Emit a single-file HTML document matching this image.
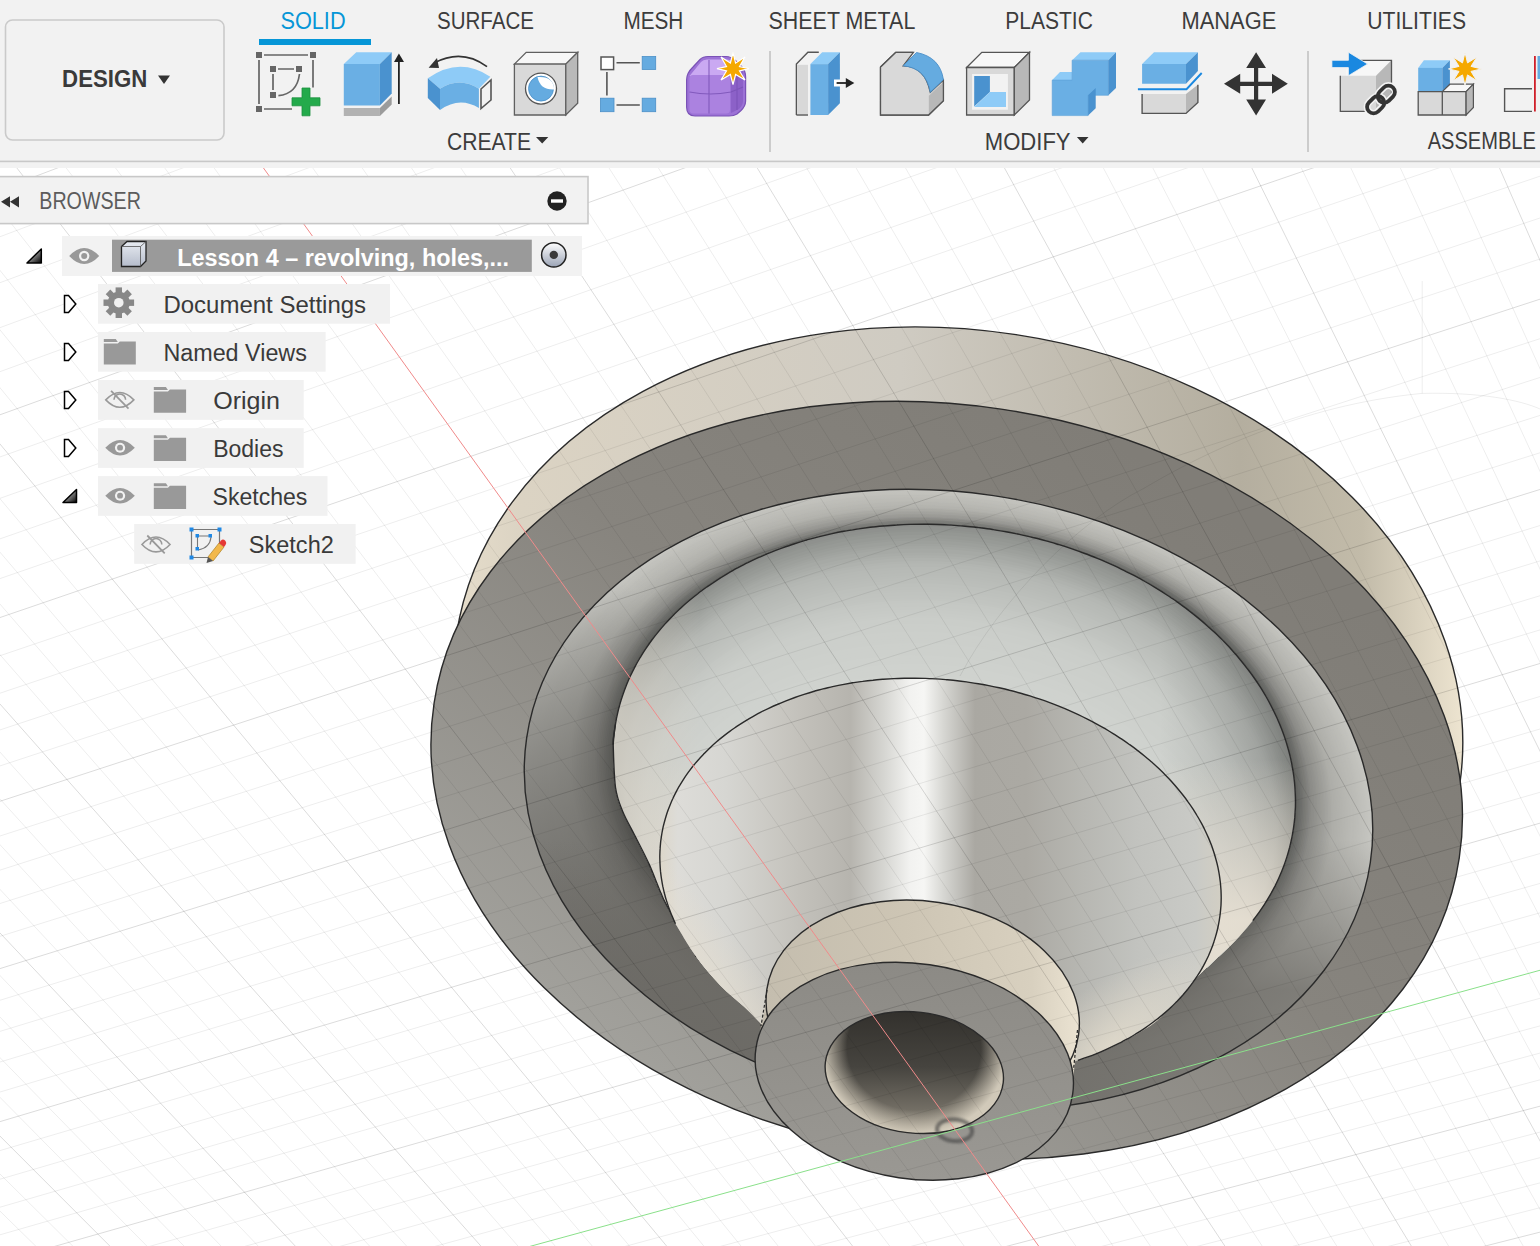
<!DOCTYPE html>
<html><head><meta charset="utf-8"><style>
html,body{margin:0;padding:0;}
body{width:1540px;height:1246px;overflow:hidden;position:relative;background:#fff;font-family:"Liberation Sans",sans-serif;}
#vp{position:absolute;left:0;top:0;}
</style></head><body>
<svg id="vp" width="1540" height="1246" viewBox="0 0 1540 1246">
<defs>
<linearGradient id="gBand" gradientUnits="userSpaceOnUse" x1="440" y1="0" x2="1465" y2="0">
 <stop offset="0" stop-color="#e8dfcc"/><stop offset="0.08" stop-color="#dbd3c3"/><stop offset="0.45" stop-color="#cfcbc2"/>
 <stop offset="0.78" stop-color="#b4ae9f"/><stop offset="0.9" stop-color="#c2bba9"/><stop offset="1" stop-color="#eee5d1"/></linearGradient>
<linearGradient id="gFlange" gradientUnits="userSpaceOnUse" x1="1100" y1="430" x2="650" y2="1080">
 <stop offset="0" stop-color="#807d77"/><stop offset="0.45" stop-color="#87847e"/><stop offset="1" stop-color="#a2a19c"/></linearGradient>
<radialGradient id="gGroove" gradientUnits="userSpaceOnUse" cx="0" cy="0" r="1" gradientTransform="translate(948.5 800.2) rotate(8.4) scale(426.4 307.9)">
 <stop offset="0.78" stop-color="#55534f"/><stop offset="0.87" stop-color="#8b8a85"/><stop offset="1" stop-color="#c2c1bb"/></radialGradient>
<linearGradient id="gGrooveL" gradientUnits="userSpaceOnUse" x1="560" y1="930" x2="740" y2="660">
 <stop offset="0" stop-color="#4a4844" stop-opacity="0.72"/><stop offset="0.45" stop-color="#4a4844" stop-opacity="0.42"/><stop offset="1" stop-color="#4a4844" stop-opacity="0"/></linearGradient>
<linearGradient id="gFloor" gradientUnits="userSpaceOnUse" x1="0" y1="840" x2="0" y2="990">
 <stop offset="0" stop-color="#6f6d68" stop-opacity="0"/><stop offset="1" stop-color="#6d6b66" stop-opacity="0.8"/></linearGradient>
<linearGradient id="gDome" gradientUnits="userSpaceOnUse" x1="0" y1="522" x2="0" y2="1030">
 <stop offset="0" stop-color="#7a7c79"/><stop offset="0.1" stop-color="#adb0ac"/><stop offset="0.3" stop-color="#c8cbc7"/>
 <stop offset="0.65" stop-color="#d2d3cf"/><stop offset="1" stop-color="#e8e2d5"/></linearGradient>
<linearGradient id="gCone" gradientUnits="userSpaceOnUse" x1="658" y1="877" x2="1224" y2="877">
 <stop offset="0" stop-color="#dcd6c8"/><stop offset="0.035" stop-color="#dddcd8"/><stop offset="0.12" stop-color="#d6d6d2"/><stop offset="0.17" stop-color="#cfcec9"/>
 <stop offset="0.25" stop-color="#c3c1bb"/><stop offset="0.34" stop-color="#b6b4ae"/><stop offset="0.40" stop-color="#d6d6d2"/>
 <stop offset="0.445" stop-color="#f2f2f0"/><stop offset="0.47" stop-color="#f6f6f4"/><stop offset="0.505" stop-color="#d6d6d2"/>
 <stop offset="0.56" stop-color="#aaa8a2"/><stop offset="0.65" stop-color="#aba9a3"/><stop offset="0.75" stop-color="#b7b7b2"/>
 <stop offset="0.85" stop-color="#c2c3bf"/><stop offset="0.95" stop-color="#c9cac6"/><stop offset="1" stop-color="#d3cfc3"/></linearGradient>
<radialGradient id="gConeBR" gradientUnits="userSpaceOnUse" cx="0" cy="0" r="1" gradientTransform="translate(1110 1045) rotate(-35) scale(150 60)">
 <stop offset="0" stop-color="#e8e0cf" stop-opacity="0.75"/><stop offset="1" stop-color="#e8e0cf" stop-opacity="0"/></radialGradient>
<linearGradient id="gBoss" gradientUnits="userSpaceOnUse" x1="760" y1="0" x2="1080" y2="0">
 <stop offset="0" stop-color="#c4bdae"/><stop offset="0.45" stop-color="#cdc5b4"/><stop offset="0.85" stop-color="#d8d0bf"/><stop offset="1" stop-color="#ebe3d2"/></linearGradient>
<linearGradient id="gFace" gradientUnits="userSpaceOnUse" x1="0" y1="960" x2="0" y2="1180">
 <stop offset="0" stop-color="#8c8a85"/><stop offset="1" stop-color="#9a9893"/></linearGradient>
<linearGradient id="gHole" gradientUnits="userSpaceOnUse" x1="0" y1="1012" x2="0" y2="1134">
 <stop offset="0" stop-color="#33312d"/><stop offset="0.45" stop-color="#46443f"/><stop offset="1" stop-color="#8c867a"/></linearGradient>
<radialGradient id="gHoleEdge" gradientUnits="userSpaceOnUse" cx="0" cy="0" r="1" gradientTransform="translate(914 1048) rotate(6.6) scale(93 86)">
 <stop offset="0.72" stop-color="#d8d0bf" stop-opacity="0"/><stop offset="1" stop-color="#dcd4c3" stop-opacity="0.9"/></radialGradient>
<filter id="fBlur" x="-20%" y="-20%" width="140%" height="140%"><feGaussianBlur stdDeviation="0.9"/></filter>
<linearGradient id="gGrooveTop" gradientUnits="userSpaceOnUse" x1="0" y1="488" x2="0" y2="600">
 <stop offset="0" stop-color="#c4c3bd" stop-opacity="0.3"/><stop offset="1" stop-color="#c4c3bd" stop-opacity="0"/></linearGradient>
<linearGradient id="gDomeBot" gradientUnits="userSpaceOnUse" x1="0" y1="760" x2="0" y2="920">
 <stop offset="0" stop-color="#e4ddd0" stop-opacity="0"/><stop offset="1" stop-color="#e6dfd2" stop-opacity="0.95"/></linearGradient>
<linearGradient id="gDomeL" gradientUnits="userSpaceOnUse" x1="610" y1="0" x2="700" y2="0">
 <stop offset="0" stop-color="#d6d2c8" stop-opacity="0.9"/><stop offset="1" stop-color="#d6d2c8" stop-opacity="0"/></linearGradient>
<linearGradient id="gDomeR" gradientUnits="userSpaceOnUse" x1="1160" y1="0" x2="1295" y2="0">
 <stop offset="0" stop-color="#5a5c5a" stop-opacity="0"/><stop offset="1" stop-color="#5a5c5a" stop-opacity="0.3"/></linearGradient>
<linearGradient id="gConeL" gradientUnits="userSpaceOnUse" x1="712" y1="993" x2="752" y2="960">
 <stop offset="0" stop-color="#e6dece" stop-opacity="0.7"/><stop offset="1" stop-color="#e6dece" stop-opacity="0"/></linearGradient>
</defs>
<path d="M1459.63,785.17 A507.2,380.0 8.5 1 1 456.37,635.23 A507.2,380.0 8.5 1 1 1459.63,785.17 Z" fill="url(#gBand)" stroke="#2a2a2a" stroke-width="1.4"/>
<path d="M1459.27,857.92 A518.4,374.5 8.6 1 1 434.13,702.88 A518.4,374.5 8.6 1 1 1459.27,857.92 Z" fill="url(#gFlange)" stroke="#2a2a2a" stroke-width="1.4"/>
<path d="M1370.33,862.49 A426.4,307.9 8.4 1 1 526.67,737.91 A426.4,307.9 8.4 1 1 1370.33,862.49 Z" fill="#c6c6c1" />
<path d="M1368.79,861.81 A424.73199999999997,306.768 8.402 1 1 528.44,737.69 A424.73199999999997,306.768 8.402 1 1 1368.79,861.81 Z" fill="#c5c5c0" />
<path d="M1367.25,861.14 A423.06399999999996,305.63599999999997 8.404 1 1 530.21,737.48 A423.06399999999996,305.63599999999997 8.404 1 1 1367.25,861.14 Z" fill="#c4c4bf" />
<path d="M1365.71,860.46 A421.396,304.504 8.406 1 1 531.97,737.26 A421.396,304.504 8.406 1 1 1365.71,860.46 Z" fill="#c3c3be" />
<path d="M1364.17,859.79 A419.728,303.37199999999996 8.408000000000001 1 1 533.74,737.04 A419.728,303.37199999999996 8.408000000000001 1 1 1364.17,859.79 Z" fill="#c2c2bd" />
<path d="M1362.63,859.11 A418.06,302.24 8.41 1 1 535.51,736.83 A418.06,302.24 8.41 1 1 1362.63,859.11 Z" fill="#c1c1bc" />
<path d="M1361.10,858.44 A416.39199999999994,301.108 8.412 1 1 537.27,736.61 A416.39199999999994,301.108 8.412 1 1 1361.10,858.44 Z" fill="#c0c0bb" />
<path d="M1359.56,857.76 A414.72399999999993,299.976 8.414 1 1 539.04,736.39 A414.72399999999993,299.976 8.414 1 1 1359.56,857.76 Z" fill="#bfbfba" />
<path d="M1358.02,857.09 A413.056,298.844 8.416 1 1 540.80,736.18 A413.056,298.844 8.416 1 1 1358.02,857.09 Z" fill="#bebeb9" />
<path d="M1356.48,856.41 A411.388,297.712 8.418000000000001 1 1 542.57,735.96 A411.388,297.712 8.418000000000001 1 1 1356.48,856.41 Z" fill="#bdbdb8" />
<path d="M1354.94,855.73 A409.71999999999997,296.58 8.42 1 1 544.34,735.75 A409.71999999999997,296.58 8.42 1 1 1354.94,855.73 Z" fill="#bcbcb7" />
<path d="M1353.41,855.06 A408.05199999999996,295.448 8.422 1 1 546.10,735.53 A408.05199999999996,295.448 8.422 1 1 1353.41,855.06 Z" fill="#bbbbb6" />
<path d="M1351.87,854.38 A406.38399999999996,294.316 8.424 1 1 547.87,735.31 A406.38399999999996,294.316 8.424 1 1 1351.87,854.38 Z" fill="#babab5" />
<path d="M1350.33,853.71 A404.716,293.18399999999997 8.426 1 1 549.63,735.10 A404.716,293.18399999999997 8.426 1 1 1350.33,853.71 Z" fill="#babab5" />
<path d="M1348.79,853.03 A403.048,292.052 8.428 1 1 551.40,734.88 A403.048,292.052 8.428 1 1 1348.79,853.03 Z" fill="#b9b9b4" />
<path d="M1347.25,852.35 A401.38,290.91999999999996 8.43 1 1 553.17,734.67 A401.38,290.91999999999996 8.43 1 1 1347.25,852.35 Z" fill="#b8b8b3" />
<path d="M1345.72,851.68 A399.712,289.788 8.432 1 1 554.93,734.45 A399.712,289.788 8.432 1 1 1345.72,851.68 Z" fill="#b7b7b2" />
<path d="M1344.18,851.00 A398.044,288.656 8.434000000000001 1 1 556.70,734.24 A398.044,288.656 8.434000000000001 1 1 1344.18,851.00 Z" fill="#b6b6b1" />
<path d="M1342.64,850.32 A396.376,287.524 8.436 1 1 558.46,734.02 A396.376,287.524 8.436 1 1 1342.64,850.32 Z" fill="#b5b5b0" />
<path d="M1341.10,849.65 A394.70799999999997,286.392 8.438 1 1 560.23,733.81 A394.70799999999997,286.392 8.438 1 1 1341.10,849.65 Z" fill="#b4b4af" />
<path d="M1339.56,848.97 A393.03999999999996,285.26 8.440000000000001 1 1 562.00,733.59 A393.03999999999996,285.26 8.440000000000001 1 1 1339.56,848.97 Z" fill="#b3b3ae" />
<path d="M1338.03,848.29 A391.37199999999996,284.128 8.442 1 1 563.76,733.38 A391.37199999999996,284.128 8.442 1 1 1338.03,848.29 Z" fill="#b2b2ad" />
<path d="M1336.49,847.61 A389.704,282.996 8.443999999999999 1 1 565.53,733.16 A389.704,282.996 8.443999999999999 1 1 1336.49,847.61 Z" fill="#b1b1ac" />
<path d="M1334.95,846.94 A388.036,281.864 8.446 1 1 567.29,732.95 A388.036,281.864 8.446 1 1 1334.95,846.94 Z" fill="#b0b0ab" />
<path d="M1333.41,846.26 A386.368,280.73199999999997 8.448 1 1 569.06,732.73 A386.368,280.73199999999997 8.448 1 1 1333.41,846.26 Z" fill="#afafaa" />
<path d="M1331.87,845.58 A384.7,279.6 8.45 1 1 570.83,732.52 A384.7,279.6 8.45 1 1 1331.87,845.58 Z" fill="#aeaea9" />
<path d="M1330.34,844.90 A383.032,278.46799999999996 8.452 1 1 572.59,732.31 A383.032,278.46799999999996 8.452 1 1 1330.34,844.90 Z" fill="#acaca7" />
<path d="M1328.80,844.22 A381.36400000000003,277.336 8.454 1 1 574.36,732.09 A381.36400000000003,277.336 8.454 1 1 1328.80,844.22 Z" fill="#a9a9a4" />
<path d="M1327.26,843.55 A379.696,276.204 8.456000000000001 1 1 576.12,731.88 A379.696,276.204 8.456000000000001 1 1 1327.26,843.55 Z" fill="#a7a7a2" />
<path d="M1325.72,842.87 A378.028,275.072 8.458 1 1 577.89,731.66 A378.028,275.072 8.458 1 1 1325.72,842.87 Z" fill="#a4a4a0" />
<path d="M1324.18,842.19 A376.36,273.94 8.46 1 1 579.66,731.45 A376.36,273.94 8.46 1 1 1324.18,842.19 Z" fill="#a2a29d" />
<path d="M1322.65,841.51 A374.692,272.808 8.462 1 1 581.42,731.24 A374.692,272.808 8.462 1 1 1322.65,841.51 Z" fill="#9f9f9b" />
<path d="M1321.11,840.83 A373.024,271.67600000000004 8.464 1 1 583.19,731.02 A373.024,271.67600000000004 8.464 1 1 1321.11,840.83 Z" fill="#9d9d98" />
<path d="M1319.57,840.15 A371.356,270.544 8.466 1 1 584.95,730.81 A371.356,270.544 8.466 1 1 1319.57,840.15 Z" fill="#9b9b96" />
<path d="M1318.03,839.48 A369.688,269.412 8.468 1 1 586.72,730.60 A369.688,269.412 8.468 1 1 1318.03,839.48 Z" fill="#989894" />
<path d="M1316.50,838.80 A368.02,268.28 8.469999999999999 1 1 588.48,730.38 A368.02,268.28 8.469999999999999 1 1 1316.50,838.80 Z" fill="#969691" />
<path d="M1314.96,838.12 A366.352,267.148 8.472000000000001 1 1 590.25,730.17 A366.352,267.148 8.472000000000001 1 1 1314.96,838.12 Z" fill="#93938f" />
<path d="M1313.42,837.44 A364.68399999999997,266.016 8.474 1 1 592.02,729.96 A364.68399999999997,266.016 8.474 1 1 1313.42,837.44 Z" fill="#91918d" />
<path d="M1311.88,836.76 A363.01599999999996,264.884 8.475999999999999 1 1 593.78,729.75 A363.01599999999996,264.884 8.475999999999999 1 1 1311.88,836.76 Z" fill="#8e8e8a" />
<path d="M1310.35,836.08 A361.348,263.752 8.478 1 1 595.55,729.53 A361.348,263.752 8.478 1 1 1310.35,836.08 Z" fill="#8c8c88" />
<path d="M1308.81,835.40 A359.68000000000006,262.62 8.48 1 1 597.31,729.32 A359.68000000000006,262.62 8.48 1 1 1308.81,835.40 Z" fill="#888884" />
<path d="M1307.27,834.72 A358.01200000000006,261.48800000000006 8.482000000000001 1 1 599.08,729.11 A358.01200000000006,261.48800000000006 8.482000000000001 1 1 1307.27,834.72 Z" fill="#838380" />
<path d="M1305.73,834.04 A356.344,260.356 8.484 1 1 600.84,728.90 A356.344,260.356 8.484 1 1 1305.73,834.04 Z" fill="#7f7f7b" />
<path d="M1304.19,833.36 A354.67600000000004,259.224 8.486 1 1 602.61,728.68 A354.67600000000004,259.224 8.486 1 1 1304.19,833.36 Z" fill="#7b7b77" />
<path d="M1302.66,832.68 A353.008,258.092 8.488 1 1 604.37,728.47 A353.008,258.092 8.488 1 1 1302.66,832.68 Z" fill="#767773" />
<path d="M1301.12,832.00 A351.34,256.96000000000004 8.49 1 1 606.14,728.26 A351.34,256.96000000000004 8.49 1 1 1301.12,832.00 Z" fill="#72726f" />
<path d="M1299.58,831.32 A349.672,255.82800000000003 8.492 1 1 607.91,728.05 A349.672,255.82800000000003 8.492 1 1 1299.58,831.32 Z" fill="#6d6e6b" />
<path d="M1298.04,830.64 A348.00399999999996,254.696 8.494 1 1 609.67,727.84 A348.00399999999996,254.696 8.494 1 1 1298.04,830.64 Z" fill="#696a67" />
<path d="M1296.51,829.96 A346.33599999999996,253.564 8.496 1 1 611.44,727.62 A346.33599999999996,253.564 8.496 1 1 1296.51,829.96 Z" fill="#656662" />
<path d="M1294.97,829.28 A344.668,252.432 8.498 1 1 613.20,727.41 A344.668,252.432 8.498 1 1 1294.97,829.28 Z" fill="#60615e" />
<path d="M1293.43,828.60 A343.0,251.3 8.5 1 1 614.97,727.20 A343.0,251.3 8.5 1 1 1293.43,828.60 Z" fill="#5c5d5a" />
<clipPath id="cE3"><path d="M1370.33,862.49 A426.4,307.9 8.4 1 1 526.67,737.91 A426.4,307.9 8.4 1 1 1370.33,862.49 Z" fill="#000" /></clipPath>
<g clip-path="url(#cE3)">
<rect x="400" y="400" width="1100" height="800" fill="url(#gGrooveTop)"/>
<rect x="400" y="400" width="1100" height="800" fill="url(#gGrooveL)"/>
<rect x="400" y="400" width="1100" height="800" fill="url(#gFloor)"/>
</g>
<path d="M1370.33,862.49 A426.4,307.9 8.4 1 1 526.67,737.91 A426.4,307.9 8.4 1 1 1370.33,862.49 Z" fill="none" stroke="#2a2a2a" stroke-width="1.4"/>
<clipPath id="cDome"><path d="M761.2,1023.9 C758.4,1021.1 751.2,1013.5 744.4,1007.1 C737.6,1000.7 728.3,993.8 720.3,985.4 C712.3,977.0 703.4,967.0 696.2,956.6 C689.0,946.2 682.4,932.4 677.0,922.9 C671.6,913.4 668.3,909.2 663.7,899.5 C659.1,889.8 654.0,875.1 649.2,864.4 C644.4,853.7 639.2,844.3 634.8,835.5 C630.4,826.7 625.9,819.5 622.7,811.5 C619.5,803.5 617.1,798.6 615.5,787.5 C613.9,776.4 613.5,753.5 613.2,744.7 C613.0,735.8 613.7,738.0 614.0,734.6 C614.4,731.3 614.8,727.9 615.4,724.6 C615.9,721.3 616.5,718.0 617.3,714.7 C618.0,711.5 618.8,708.2 619.7,704.9 C620.6,701.7 621.6,698.5 622.7,695.3 C623.8,692.1 624.9,688.9 626.2,685.7 C627.5,682.6 628.8,679.4 630.2,676.3 C631.7,673.2 633.2,670.1 634.8,667.1 C636.4,664.0 638.1,661.0 639.9,658.0 C641.7,655.1 643.5,652.1 645.5,649.2 C647.4,646.3 649.4,643.4 651.5,640.5 C653.6,637.7 655.8,634.9 658.1,632.1 C660.4,629.3 662.7,626.6 665.1,623.9 C667.6,621.2 670.1,618.5 672.6,615.9 C675.2,613.3 677.9,610.8 680.6,608.2 C683.3,605.7 686.1,603.2 689.0,600.8 C691.8,598.4 694.8,596.0 697.8,593.7 C700.8,591.4 703.9,589.1 707.0,586.8 C710.2,584.6 713.4,582.4 716.7,580.3 C719.9,578.2 723.3,576.1 726.7,574.1 C730.1,572.1 733.5,570.1 737.0,568.2 C740.6,566.3 744.1,564.4 747.8,562.7 C751.4,560.9 755.1,559.1 758.8,557.4 C762.6,555.8 766.3,554.2 770.2,552.6 C774.0,551.0 777.9,549.5 781.8,548.1 C785.8,546.7 789.8,545.3 793.8,544.0 C797.8,542.7 801.9,541.4 806.0,540.2 C810.1,539.1 814.2,537.9 818.4,536.9 C822.6,535.8 826.8,534.8 831.1,533.9 C835.3,533.0 839.6,532.1 843.9,531.3 C848.2,530.5 852.6,529.8 857.0,529.1 C861.3,528.5 865.7,527.9 870.2,527.3 C874.6,526.8 879.0,526.4 883.5,526.0 C887.9,525.6 892.4,525.2 896.9,525.0 C901.4,524.7 905.9,524.5 910.4,524.4 C915.0,524.3 919.5,524.2 924.0,524.2 C928.6,524.3 933.1,524.3 937.7,524.5 C942.2,524.6 946.8,524.8 951.4,525.1 C955.9,525.4 960.5,525.8 965.0,526.2 C969.6,526.6 974.1,527.1 978.7,527.6 C983.2,528.2 987.8,528.8 992.3,529.5 C996.8,530.2 1001.4,530.9 1005.9,531.8 C1010.4,532.6 1014.9,533.5 1019.3,534.4 C1023.8,535.4 1028.3,536.4 1032.7,537.5 C1037.2,538.5 1041.6,539.7 1046.0,540.9 C1050.4,542.1 1054.7,543.4 1059.1,544.7 C1063.4,546.0 1067.7,547.4 1072.0,548.9 C1076.3,550.4 1080.5,551.9 1084.7,553.5 C1088.9,555.0 1093.1,556.7 1097.3,558.4 C1101.4,560.1 1105.5,561.8 1109.6,563.6 C1113.6,565.5 1117.6,567.3 1121.6,569.3 C1125.6,571.2 1129.5,573.2 1133.4,575.2 C1137.3,577.2 1141.1,579.3 1144.9,581.5 C1148.7,583.6 1152.4,585.8 1156.1,588.1 C1159.8,590.3 1163.4,592.6 1166.9,595.0 C1170.5,597.3 1174.0,599.7 1177.5,602.1 C1180.9,604.6 1184.3,607.1 1187.6,609.6 C1191.0,612.2 1194.2,614.7 1197.4,617.4 C1200.6,620.0 1203.8,622.7 1206.8,625.4 C1209.9,628.1 1212.9,630.8 1215.8,633.6 C1218.7,636.4 1221.6,639.2 1224.4,642.1 C1227.2,644.9 1229.9,647.8 1232.5,650.8 C1235.2,653.7 1237.7,656.7 1240.2,659.7 C1242.7,662.7 1245.1,665.7 1247.4,668.8 C1249.8,671.8 1252.0,674.9 1254.2,678.0 C1256.4,681.1 1258.5,684.3 1260.5,687.4 C1262.5,690.6 1264.4,693.8 1266.3,697.0 C1268.1,700.2 1269.9,703.5 1271.5,706.7 C1273.2,710.0 1274.8,713.2 1276.3,716.5 C1277.8,719.8 1279.2,723.1 1280.6,726.4 C1281.9,729.8 1283.2,733.1 1284.3,736.4 C1285.5,739.8 1286.5,743.1 1287.5,746.5 C1288.5,749.9 1289.4,753.2 1290.2,756.6 C1291.0,760.0 1291.7,763.4 1292.3,766.8 C1292.9,770.1 1293.5,773.5 1293.9,776.9 C1294.3,780.3 1294.7,783.7 1294.9,787.1 C1295.2,790.5 1295.3,793.9 1295.4,797.2 C1295.5,800.6 1295.5,804.0 1295.4,807.4 C1295.2,810.7 1295.0,814.1 1294.8,817.4 C1294.5,820.8 1294.1,824.1 1293.6,827.4 C1293.1,830.8 1292.6,834.1 1291.9,837.4 C1291.2,840.7 1290.5,843.9 1289.7,847.2 C1288.8,850.5 1287.9,853.7 1286.9,856.9 C1285.9,860.1 1284.8,863.3 1283.6,866.5 C1282.4,869.7 1281.1,872.9 1279.7,876.0 C1278.4,879.1 1276.9,882.2 1275.4,885.3 C1273.8,888.3 1272.2,891.4 1270.5,894.4 C1268.8,897.4 1267.0,900.4 1265.1,903.3 C1263.2,906.3 1261.2,909.2 1259.2,912.1 C1257.2,914.9 1257.2,915.3 1252.8,920.6 C1248.4,925.8 1242.5,933.7 1232.7,943.6 C1222.9,953.5 1206.2,967.5 1194.0,980.0 C1181.8,992.5 1171.3,1008.4 1159.5,1018.7 C1147.7,1029.0 1133.0,1036.1 1122.9,1041.8 C1112.8,1047.5 1102.7,1050.9 1098.7,1052.7 L1060,1062 L900,1080 L790,1040 Z"/></clipPath>
<g clip-path="url(#cDome)">
<path d="M1315.50,802.17 A361.27,267.5 8.620000000000001 1 1 601.12,693.87 A361.27,267.5 8.620000000000001 1 1 1315.50,802.17 Z" fill="#8c8e8b" />
<path d="M1314.13,803.80 A360.139,266.4971428571429 8.612571428571428 1 1 601.98,695.94 A360.139,266.4971428571429 8.612571428571428 1 1 1314.13,803.80 Z" fill="#8c8e8b" />
<path d="M1312.77,805.44 A359.00800000000004,265.49428571428575 8.605142857142857 1 1 602.83,698.00 A359.00800000000004,265.49428571428575 8.605142857142857 1 1 1312.77,805.44 Z" fill="#8c8e8b" />
<path d="M1311.40,807.07 A357.877,264.4914285714286 8.597714285714286 1 1 603.69,700.07 A357.877,264.4914285714286 8.597714285714286 1 1 1311.40,807.07 Z" fill="#8c8e8b" />
<path d="M1310.04,808.71 A356.746,263.48857142857145 8.590285714285715 1 1 604.55,702.13 A356.746,263.48857142857145 8.590285714285715 1 1 1310.04,808.71 Z" fill="#8c8e8b" />
<path d="M1308.67,810.34 A355.61499999999995,262.4857142857143 8.582857142857142 1 1 605.41,704.20 A355.61499999999995,262.4857142857143 8.582857142857142 1 1 1308.67,810.34 Z" fill="#8c8e8b" />
<path d="M1307.30,811.98 A354.484,261.4828571428572 8.57542857142857 1 1 606.26,706.26 A354.484,261.4828571428572 8.57542857142857 1 1 1307.30,811.98 Z" fill="#8c8e8b" />
<path d="M1305.94,813.61 A353.353,260.48 8.568000000000001 1 1 607.12,708.32 A353.353,260.48 8.568000000000001 1 1 1305.94,813.61 Z" fill="#8c8e8b" />
<path d="M1304.57,815.25 A352.222,259.4771428571429 8.560571428571428 1 1 607.98,710.39 A352.222,259.4771428571429 8.560571428571428 1 1 1304.57,815.25 Z" fill="#8c8e8b" />
<path d="M1303.21,816.88 A351.091,258.4742857142857 8.553142857142857 1 1 608.83,712.45 A351.091,258.4742857142857 8.553142857142857 1 1 1303.21,816.88 Z" fill="#8c8e8b" />
<path d="M1301.84,818.52 A349.96,257.4714285714286 8.545714285714286 1 1 609.69,714.51 A349.96,257.4714285714286 8.545714285714286 1 1 1301.84,818.52 Z" fill="#8c8e8b" />
<path d="M1300.47,820.16 A348.829,256.46857142857147 8.538285714285715 1 1 610.55,716.58 A348.829,256.46857142857147 8.538285714285715 1 1 1300.47,820.16 Z" fill="#8c8e8b" />
<path d="M1299.11,821.79 A347.69800000000004,255.4657142857143 8.530857142857142 1 1 611.41,718.64 A347.69800000000004,255.4657142857143 8.530857142857142 1 1 1299.11,821.79 Z" fill="#8c8e8b" />
<path d="M1297.74,823.43 A346.567,254.46285714285716 8.523428571428571 1 1 612.26,720.70 A346.567,254.46285714285716 8.523428571428571 1 1 1297.74,823.43 Z" fill="#8c8e8b" />
<path d="M1296.38,825.07 A345.43600000000004,253.46000000000004 8.516 1 1 613.12,722.76 A345.43600000000004,253.46000000000004 8.516 1 1 1296.38,825.07 Z" fill="#8c8e8b" />
<path d="M1295.01,826.71 A344.305,252.45714285714288 8.508571428571429 1 1 613.98,724.82 A344.305,252.45714285714288 8.508571428571429 1 1 1295.01,826.71 Z" fill="#8c8e8b" />
<path d="M1293.64,828.35 A343.17400000000004,251.45428571428573 8.501142857142856 1 1 614.84,726.88 A343.17400000000004,251.45428571428573 8.501142857142856 1 1 1293.64,828.35 Z" fill="#8c8e8b" />
<path d="M1292.28,829.99 A342.043,250.45142857142858 8.493714285714285 1 1 615.69,728.95 A342.043,250.45142857142858 8.493714285714285 1 1 1292.28,829.99 Z" fill="#8f918e" />
<path d="M1290.91,831.62 A340.91200000000003,249.44857142857146 8.486285714285714 1 1 616.55,731.01 A340.91200000000003,249.44857142857146 8.486285714285714 1 1 1290.91,831.62 Z" fill="#919490" />
<path d="M1289.54,833.26 A339.78099999999995,248.4457142857143 8.478857142857143 1 1 617.41,733.07 A339.78099999999995,248.4457142857143 8.478857142857143 1 1 1289.54,833.26 Z" fill="#949793" />
<path d="M1288.18,834.90 A338.65,247.44285714285715 8.471428571428572 1 1 618.27,735.13 A338.65,247.44285714285715 8.471428571428572 1 1 1288.18,834.90 Z" fill="#979a96" />
<path d="M1286.81,836.54 A337.519,246.44000000000003 8.464 1 1 619.12,737.19 A337.519,246.44000000000003 8.464 1 1 1286.81,836.54 Z" fill="#9a9d99" />
<path d="M1285.44,838.18 A336.388,245.43714285714287 8.45657142857143 1 1 619.98,739.24 A336.388,245.43714285714287 8.45657142857143 1 1 1285.44,838.18 Z" fill="#9da09c" />
<path d="M1284.08,839.82 A335.257,244.43428571428572 8.449142857142856 1 1 620.84,741.30 A335.257,244.43428571428572 8.449142857142856 1 1 1284.08,839.82 Z" fill="#a0a39f" />
<path d="M1282.71,841.46 A334.126,243.43142857142857 8.441714285714285 1 1 621.70,743.36 A334.126,243.43142857142857 8.441714285714285 1 1 1282.71,841.46 Z" fill="#a3a6a2" />
<path d="M1281.34,843.10 A332.995,242.42857142857144 8.434285714285714 1 1 622.56,745.42 A332.995,242.42857142857144 8.434285714285714 1 1 1281.34,843.10 Z" fill="#a6a9a5" />
<path d="M1279.98,844.75 A331.86400000000003,241.4257142857143 8.426857142857143 1 1 623.41,747.48 A331.86400000000003,241.4257142857143 8.426857142857143 1 1 1279.98,844.75 Z" fill="#a9aca8" />
<path d="M1278.61,846.39 A330.733,240.42285714285714 8.419428571428572 1 1 624.27,749.54 A330.733,240.42285714285714 8.419428571428572 1 1 1278.61,846.39 Z" fill="#acafab" />
<path d="M1277.24,848.03 A329.60200000000003,239.42000000000002 8.411999999999999 1 1 625.13,751.59 A329.60200000000003,239.42000000000002 8.411999999999999 1 1 1277.24,848.03 Z" fill="#afb2ae" />
<path d="M1275.88,849.67 A328.471,238.41714285714286 8.404571428571428 1 1 625.99,753.65 A328.471,238.41714285714286 8.404571428571428 1 1 1275.88,849.67 Z" fill="#b2b5b1" />
<path d="M1274.51,851.31 A327.34000000000003,237.4142857142857 8.397142857142857 1 1 626.85,755.71 A327.34000000000003,237.4142857142857 8.397142857142857 1 1 1274.51,851.31 Z" fill="#b4b7b3" />
<path d="M1273.14,852.96 A326.209,236.4114285714286 8.389714285714286 1 1 627.70,757.77 A326.209,236.4114285714286 8.389714285714286 1 1 1273.14,852.96 Z" fill="#b6b9b5" />
<path d="M1271.77,854.60 A325.078,235.40857142857143 8.382285714285715 1 1 628.56,759.82 A325.078,235.40857142857143 8.382285714285715 1 1 1271.77,854.60 Z" fill="#b7bab6" />
<path d="M1270.41,856.24 A323.947,234.40571428571428 8.374857142857143 1 1 629.42,761.88 A323.947,234.40571428571428 8.374857142857143 1 1 1270.41,856.24 Z" fill="#b8bbb7" />
<path d="M1269.04,857.89 A322.81600000000003,233.40285714285716 8.367428571428572 1 1 630.28,763.93 A322.81600000000003,233.40285714285716 8.367428571428572 1 1 1269.04,857.89 Z" fill="#b9bcb8" />
<path d="M1267.67,859.53 A321.685,232.39999999999998 8.36 1 1 631.14,765.99 A321.685,232.39999999999998 8.36 1 1 1267.67,859.53 Z" fill="#babdb9" />
<path d="M1266.30,861.17 A320.55400000000003,231.39714285714288 8.352571428571428 1 1 632.00,768.04 A320.55400000000003,231.39714285714288 8.352571428571428 1 1 1266.30,861.17 Z" fill="#bbbeba" />
<path d="M1264.94,862.82 A319.423,230.39428571428573 8.345142857142857 1 1 632.86,770.10 A319.423,230.39428571428573 8.345142857142857 1 1 1264.94,862.82 Z" fill="#bdc0bc" />
<path d="M1263.57,864.46 A318.29200000000003,229.3914285714286 8.337714285714286 1 1 633.71,772.15 A318.29200000000003,229.3914285714286 8.337714285714286 1 1 1263.57,864.46 Z" fill="#bec1bd" />
<path d="M1262.20,866.11 A317.161,228.38857142857145 8.330285714285715 1 1 634.57,774.21 A317.161,228.38857142857145 8.330285714285715 1 1 1262.20,866.11 Z" fill="#bfc2be" />
<path d="M1260.83,867.75 A316.03,227.3857142857143 8.322857142857142 1 1 635.43,776.26 A316.03,227.3857142857143 8.322857142857142 1 1 1260.83,867.75 Z" fill="#c0c3bf" />
<path d="M1259.47,869.40 A314.899,226.38285714285718 8.315428571428571 1 1 636.29,778.32 A314.899,226.38285714285718 8.315428571428571 1 1 1259.47,869.40 Z" fill="#c1c4c0" />
<path d="M1258.10,871.05 A313.76800000000003,225.38000000000002 8.308 1 1 637.15,780.37 A313.76800000000003,225.38000000000002 8.308 1 1 1258.10,871.05 Z" fill="#c2c5c1" />
<path d="M1256.73,872.69 A312.63700000000006,224.37714285714287 8.300571428571427 1 1 638.01,782.42 A312.63700000000006,224.37714285714287 8.300571428571427 1 1 1256.73,872.69 Z" fill="#c4c7c3" />
<path d="M1255.36,874.34 A311.50600000000003,223.37428571428575 8.293142857142858 1 1 638.87,784.48 A311.50600000000003,223.37428571428575 8.293142857142858 1 1 1255.36,874.34 Z" fill="#c5c8c4" />
<path d="M1254.00,875.99 A310.375,222.37142857142857 8.285714285714285 1 1 639.73,786.53 A310.375,222.37142857142857 8.285714285714285 1 1 1254.00,875.99 Z" fill="#c6c9c5" />
<path d="M1252.63,877.63 A309.244,221.36857142857144 8.278285714285714 1 1 640.58,788.58 A309.244,221.36857142857144 8.278285714285714 1 1 1252.63,877.63 Z" fill="#c7cac6" />
<path d="M1251.26,879.28 A308.113,220.36571428571432 8.270857142857142 1 1 641.44,790.63 A308.113,220.36571428571432 8.270857142857142 1 1 1251.26,879.28 Z" fill="#c8cbc7" />
<path d="M1249.89,880.93 A306.982,219.36285714285714 8.263428571428571 1 1 642.30,792.69 A306.982,219.36285714285714 8.263428571428571 1 1 1249.89,880.93 Z" fill="#c9ccc8" />
<path d="M1248.52,882.58 A305.851,218.36 8.256 1 1 643.16,794.74 A305.851,218.36 8.256 1 1 1248.52,882.58 Z" fill="#cacdc9" />
<path d="M1247.16,884.22 A304.72,217.35714285714286 8.248571428571427 1 1 644.02,796.79 A304.72,217.35714285714286 8.248571428571427 1 1 1247.16,884.22 Z" fill="#cacdc9" />
<path d="M1245.79,885.87 A303.589,216.3542857142857 8.241142857142858 1 1 644.88,798.84 A303.589,216.3542857142857 8.241142857142858 1 1 1245.79,885.87 Z" fill="#cbceca" />
<path d="M1244.42,887.52 A302.458,215.35142857142858 8.233714285714285 1 1 645.74,800.89 A302.458,215.35142857142858 8.233714285714285 1 1 1244.42,887.52 Z" fill="#cbceca" />
<path d="M1243.05,889.17 A301.327,214.34857142857146 8.226285714285714 1 1 646.60,802.94 A301.327,214.34857142857146 8.226285714285714 1 1 1243.05,889.17 Z" fill="#cbceca" />
<path d="M1241.68,890.82 A300.196,213.34571428571428 8.218857142857143 1 1 647.46,804.99 A300.196,213.34571428571428 8.218857142857143 1 1 1241.68,890.82 Z" fill="#cccfcb" />
<path d="M1240.32,892.47 A299.065,212.34285714285716 8.21142857142857 1 1 648.32,807.04 A299.065,212.34285714285716 8.21142857142857 1 1 1240.32,892.47 Z" fill="#cccfcb" />
<path d="M1238.95,894.12 A297.934,211.34000000000003 8.204 1 1 649.18,809.09 A297.934,211.34000000000003 8.204 1 1 1238.95,894.12 Z" fill="#cccfcb" />
<path d="M1237.58,895.77 A296.80300000000005,210.33714285714288 8.196571428571428 1 1 650.04,811.14 A296.80300000000005,210.33714285714288 8.196571428571428 1 1 1237.58,895.77 Z" fill="#cccfcb" />
<path d="M1236.21,897.42 A295.672,209.33428571428573 8.189142857142857 1 1 650.90,813.19 A295.672,209.33428571428573 8.189142857142857 1 1 1236.21,897.42 Z" fill="#cdd0cc" />
<path d="M1234.84,899.07 A294.541,208.3314285714286 8.181714285714285 1 1 651.76,815.24 A294.541,208.3314285714286 8.181714285714285 1 1 1234.84,899.07 Z" fill="#cdd0cc" />
<path d="M1233.47,900.72 A293.41,207.32857142857142 8.174285714285714 1 1 652.62,817.28 A293.41,207.32857142857142 8.174285714285714 1 1 1233.47,900.72 Z" fill="#cdd0cc" />
<path d="M1232.10,902.37 A292.279,206.3257142857143 8.166857142857143 1 1 653.47,819.33 A292.279,206.3257142857143 8.166857142857143 1 1 1232.10,902.37 Z" fill="#cdd0cc" />
<path d="M1230.74,904.02 A291.148,205.32285714285717 8.15942857142857 1 1 654.33,821.38 A291.148,205.32285714285717 8.15942857142857 1 1 1230.74,904.02 Z" fill="#ced1cd" />
<path d="M1229.37,905.68 A290.01700000000005,204.32000000000002 8.152 1 1 655.19,823.43 A290.01700000000005,204.32000000000002 8.152 1 1 1229.37,905.68 Z" fill="#ced1cd" />
<path d="M1228.00,907.33 A288.886,203.31714285714287 8.144571428571428 1 1 656.05,825.47 A288.886,203.31714285714287 8.144571428571428 1 1 1228.00,907.33 Z" fill="#ced1cd" />
<path d="M1226.63,908.98 A287.75500000000005,202.31428571428575 8.137142857142857 1 1 656.91,827.52 A287.75500000000005,202.31428571428575 8.137142857142857 1 1 1226.63,908.98 Z" fill="#cfd2ce" />
<path d="M1225.26,910.63 A286.624,201.3114285714286 8.129714285714286 1 1 657.77,829.57 A286.624,201.3114285714286 8.129714285714286 1 1 1225.26,910.63 Z" fill="#cfd2ce" />
<path d="M1223.89,912.29 A285.49300000000005,200.30857142857144 8.122285714285713 1 1 658.63,831.61 A285.49300000000005,200.30857142857144 8.122285714285713 1 1 1223.89,912.29 Z" fill="#cfd2ce" />
<path d="M1222.52,913.94 A284.362,199.3057142857143 8.114857142857142 1 1 659.49,833.66 A284.362,199.3057142857143 8.114857142857142 1 1 1222.52,913.94 Z" fill="#cfd2ce" />
<path d="M1221.15,915.59 A283.23100000000005,198.30285714285716 8.10742857142857 1 1 660.35,835.71 A283.23100000000005,198.30285714285716 8.10742857142857 1 1 1221.15,915.59 Z" fill="#d0d3cf" />
<path d="M1219.79,917.25 A282.1,197.3 8.1 1 1 661.21,837.75 A282.1,197.3 8.1 1 1 1219.79,917.25 Z" fill="#d0d3cf" />
<rect x="500" y="500" width="900" height="600" fill="url(#gDomeR)"/>
<rect x="500" y="500" width="900" height="600" fill="url(#gDomeBot)"/>
<rect x="500" y="500" width="900" height="600" fill="url(#gDomeL)"/>
</g>
<path d="M613.2,744.7 C613.3,743.0 613.7,738.0 614.0,734.6 C614.4,731.3 614.8,727.9 615.4,724.6 C615.9,721.3 616.5,718.0 617.3,714.7 C618.0,711.5 618.8,708.2 619.7,704.9 C620.6,701.7 621.6,698.5 622.7,695.3 C623.8,692.1 624.9,688.9 626.2,685.7 C627.5,682.6 628.8,679.4 630.2,676.3 C631.7,673.2 633.2,670.1 634.8,667.1 C636.4,664.0 638.1,661.0 639.9,658.0 C641.7,655.1 643.5,652.1 645.5,649.2 C647.4,646.3 649.4,643.4 651.5,640.5 C653.6,637.7 655.8,634.9 658.1,632.1 C660.4,629.3 662.7,626.6 665.1,623.9 C667.6,621.2 670.1,618.5 672.6,615.9 C675.2,613.3 677.9,610.8 680.6,608.2 C683.3,605.7 686.1,603.2 689.0,600.8 C691.8,598.4 694.8,596.0 697.8,593.7 C700.8,591.4 703.9,589.1 707.0,586.8 C710.2,584.6 713.4,582.4 716.7,580.3 C719.9,578.2 723.3,576.1 726.7,574.1 C730.1,572.1 733.5,570.1 737.0,568.2 C740.6,566.3 744.1,564.4 747.8,562.7 C751.4,560.9 755.1,559.1 758.8,557.4 C762.6,555.8 766.3,554.2 770.2,552.6 C774.0,551.0 777.9,549.5 781.8,548.1 C785.8,546.7 789.8,545.3 793.8,544.0 C797.8,542.7 801.9,541.4 806.0,540.2 C810.1,539.1 814.2,537.9 818.4,536.9 C822.6,535.8 826.8,534.8 831.1,533.9 C835.3,533.0 839.6,532.1 843.9,531.3 C848.2,530.5 852.6,529.8 857.0,529.1 C861.3,528.5 865.7,527.9 870.2,527.3 C874.6,526.8 879.0,526.4 883.5,526.0 C887.9,525.6 892.4,525.2 896.9,525.0 C901.4,524.7 905.9,524.5 910.4,524.4 C915.0,524.3 919.5,524.2 924.0,524.2 C928.6,524.3 933.1,524.3 937.7,524.5 C942.2,524.6 946.8,524.8 951.4,525.1 C955.9,525.4 960.5,525.8 965.0,526.2 C969.6,526.6 974.1,527.1 978.7,527.6 C983.2,528.2 987.8,528.8 992.3,529.5 C996.8,530.2 1001.4,530.9 1005.9,531.8 C1010.4,532.6 1014.9,533.5 1019.3,534.4 C1023.8,535.4 1028.3,536.4 1032.7,537.5 C1037.2,538.5 1041.6,539.7 1046.0,540.9 C1050.4,542.1 1054.7,543.4 1059.1,544.7 C1063.4,546.0 1067.7,547.4 1072.0,548.9 C1076.3,550.4 1080.5,551.9 1084.7,553.5 C1088.9,555.0 1093.1,556.7 1097.3,558.4 C1101.4,560.1 1105.5,561.8 1109.6,563.6 C1113.6,565.5 1117.6,567.3 1121.6,569.3 C1125.6,571.2 1129.5,573.2 1133.4,575.2 C1137.3,577.2 1141.1,579.3 1144.9,581.5 C1148.7,583.6 1152.4,585.8 1156.1,588.1 C1159.8,590.3 1163.4,592.6 1166.9,595.0 C1170.5,597.3 1174.0,599.7 1177.5,602.1 C1180.9,604.6 1184.3,607.1 1187.6,609.6 C1191.0,612.2 1194.2,614.7 1197.4,617.4 C1200.6,620.0 1203.8,622.7 1206.8,625.4 C1209.9,628.1 1212.9,630.8 1215.8,633.6 C1218.7,636.4 1221.6,639.2 1224.4,642.1 C1227.2,644.9 1229.9,647.8 1232.5,650.8 C1235.2,653.7 1237.7,656.7 1240.2,659.7 C1242.7,662.7 1245.1,665.7 1247.4,668.8 C1249.8,671.8 1252.0,674.9 1254.2,678.0 C1256.4,681.1 1258.5,684.3 1260.5,687.4 C1262.5,690.6 1264.4,693.8 1266.3,697.0 C1268.1,700.2 1269.9,703.5 1271.5,706.7 C1273.2,710.0 1274.8,713.2 1276.3,716.5 C1277.8,719.8 1279.2,723.1 1280.6,726.4 C1281.9,729.8 1283.2,733.1 1284.3,736.4 C1285.5,739.8 1286.5,743.1 1287.5,746.5 C1288.5,749.9 1289.4,753.2 1290.2,756.6 C1291.0,760.0 1291.7,763.4 1292.3,766.8 C1292.9,770.1 1293.5,773.5 1293.9,776.9 C1294.3,780.3 1294.7,783.7 1294.9,787.1 C1295.2,790.5 1295.3,793.9 1295.4,797.2 C1295.5,800.6 1295.5,804.0 1295.4,807.4 C1295.2,810.7 1295.0,814.1 1294.8,817.4 C1294.5,820.8 1294.1,824.1 1293.6,827.4 C1293.1,830.8 1292.6,834.1 1291.9,837.4 C1291.2,840.7 1290.5,843.9 1289.7,847.2 C1288.8,850.5 1287.9,853.7 1286.9,856.9 C1285.9,860.1 1284.8,863.3 1283.6,866.5 C1282.4,869.7 1281.1,872.9 1279.7,876.0 C1278.4,879.1 1276.9,882.2 1275.4,885.3 C1273.8,888.3 1272.2,891.4 1270.5,894.4 C1268.8,897.4 1267.0,900.4 1265.1,903.3 C1263.2,906.3 1261.2,909.2 1259.2,912.1 C1257.2,914.9 1253.9,919.2 1252.8,920.6" fill="none" stroke="#2a2a2a" stroke-width="1.4"/>
<path d="M696.2,956.6 C693.0,951.0 682.4,932.4 677.0,922.9 C671.6,913.4 668.3,909.2 663.7,899.5 C659.1,889.8 654.0,875.1 649.2,864.4 C644.4,853.7 639.2,844.3 634.8,835.5 C630.4,826.7 625.9,819.5 622.7,811.5 C619.5,803.5 617.1,798.6 615.5,787.5 C613.9,776.4 613.5,753.5 613.2,744.7 C613.0,735.8 613.7,738.0 614.0,734.6 C614.4,731.3 615.1,726.3 615.4,724.6" fill="none" stroke="#2a2a2a" stroke-width="1.4"/>
<path d="M675.5,923.7 C674.9,922.5 673.2,918.8 672.2,916.3 C671.1,913.9 670.2,911.4 669.3,908.9 C668.3,906.4 667.5,903.9 666.7,901.4 C665.9,899.0 665.2,896.5 664.6,894.0 C663.9,891.5 663.4,888.9 662.8,886.4 C662.3,883.9 661.9,881.4 661.5,878.9 C661.1,876.4 660.8,873.9 660.5,871.4 C660.3,868.9 660.1,866.3 660.0,863.8 C659.9,861.3 659.8,858.8 659.8,856.3 C659.9,853.8 659.9,851.3 660.1,848.9 C660.2,846.4 660.5,843.9 660.7,841.4 C661.0,839.0 661.4,836.5 661.8,834.0 C662.2,831.6 662.7,829.2 663.2,826.7 C663.8,824.3 664.4,821.9 665.1,819.5 C665.8,817.1 666.5,814.7 667.3,812.3 C668.1,809.9 669.0,807.6 670.0,805.2 C670.9,802.9 671.9,800.6 673.0,798.3 C674.0,796.0 675.2,793.7 676.4,791.4 C677.6,789.1 678.8,786.9 680.2,784.7 C681.5,782.5 682.9,780.3 684.3,778.1 C685.7,775.9 687.3,773.7 688.8,771.6 C690.4,769.5 692.0,767.4 693.7,765.3 C695.4,763.2 697.1,761.2 698.9,759.2 C700.7,757.1 702.6,755.2 704.5,753.2 C706.4,751.2 708.4,749.3 710.4,747.4 C712.4,745.5 714.5,743.6 716.6,741.8 C718.8,739.9 721.0,738.1 723.2,736.4 C725.4,734.6 727.7,732.8 730.1,731.1 C732.4,729.4 734.8,727.8 737.2,726.1 C739.7,724.5 742.2,722.9 744.7,721.3 C747.2,719.8 749.8,718.2 752.4,716.8 C755.1,715.3 757.7,713.8 760.4,712.4 C763.1,711.0 765.9,709.6 768.7,708.3 C771.5,707.0 774.3,705.7 777.2,704.5 C780.1,703.2 783.0,702.0 786.0,700.8 C788.9,699.7 791.9,698.6 794.9,697.5 C797.9,696.4 801.0,695.4 804.1,694.4 C807.2,693.4 810.3,692.4 813.5,691.5 C816.6,690.6 819.8,689.8 823.0,688.9 C826.2,688.1 829.5,687.4 832.7,686.6 C836.0,685.9 839.3,685.2 842.6,684.6 C845.9,684.0 849.2,683.4 852.6,682.8 C856.0,682.3 859.3,681.8 862.7,681.4 C866.1,680.9 869.6,680.5 873.0,680.2 C876.4,679.8 879.9,679.5 883.3,679.2 C886.8,679.0 890.3,678.8 893.8,678.6 C897.2,678.4 900.7,678.3 904.2,678.2 C907.8,678.2 911.3,678.2 914.8,678.2 C918.3,678.2 921.8,678.3 925.4,678.4 C928.9,678.5 932.4,678.7 936.0,678.9 C939.5,679.1 943.0,679.4 946.6,679.7 C950.1,680.0 953.7,680.3 957.2,680.7 C960.7,681.1 964.2,681.6 967.8,682.1 C971.3,682.6 974.8,683.1 978.3,683.7 C981.8,684.3 985.3,684.9 988.8,685.6 C992.3,686.3 995.7,687.0 999.2,687.8 C1002.7,688.6 1006.1,689.4 1009.5,690.3 C1013.0,691.1 1016.4,692.0 1019.8,693.0 C1023.1,693.9 1026.5,694.9 1029.9,695.9 C1033.2,697.0 1036.6,698.1 1039.9,699.2 C1043.2,700.3 1046.5,701.5 1049.7,702.7 C1053.0,703.9 1056.2,705.1 1059.4,706.4 C1062.6,707.7 1065.8,709.0 1068.9,710.4 C1072.1,711.8 1075.2,713.2 1078.3,714.6 C1081.4,716.1 1084.4,717.6 1087.4,719.1 C1090.4,720.6 1093.4,722.2 1096.3,723.8 C1099.3,725.4 1102.2,727.0 1105.1,728.7 C1107.9,730.4 1110.7,732.1 1113.5,733.8 C1116.3,735.6 1119.1,737.3 1121.8,739.1 C1124.5,740.9 1127.1,742.8 1129.7,744.7 C1132.3,746.5 1134.9,748.4 1137.4,750.4 C1139.9,752.3 1142.4,754.3 1144.8,756.3 C1147.3,758.3 1149.6,760.3 1152.0,762.3 C1154.3,764.4 1156.6,766.5 1158.8,768.6 C1161.0,770.7 1163.2,772.8 1165.3,775.0 C1167.4,777.1 1169.5,779.3 1171.5,781.5 C1173.5,783.7 1175.5,785.9 1177.4,788.2 C1179.2,790.4 1181.1,792.7 1182.9,795.0 C1184.7,797.2 1186.4,799.5 1188.0,801.9 C1189.7,804.2 1191.3,806.5 1192.9,808.9 C1194.4,811.3 1195.9,813.6 1197.3,816.0 C1198.8,818.4 1200.1,820.8 1201.4,823.2 C1202.7,825.6 1204.0,828.1 1205.1,830.5 C1206.3,833.0 1207.4,835.4 1208.5,837.9 C1209.5,840.3 1210.5,842.8 1211.5,845.3 C1212.4,847.8 1213.2,850.2 1214.0,852.7 C1214.8,855.2 1215.5,857.7 1216.2,860.2 C1216.9,862.7 1217.5,865.2 1218.0,867.7 C1218.5,870.3 1219.0,872.8 1219.4,875.3 C1219.8,877.8 1220.1,880.3 1220.4,882.8 C1220.6,885.3 1220.8,887.8 1221.0,890.3 C1221.1,892.8 1221.2,895.3 1221.2,897.8 C1221.2,900.3 1221.1,902.8 1221.0,905.3 C1220.8,907.8 1220.6,910.3 1220.3,912.8 C1220.1,915.2 1219.7,917.7 1219.3,920.2 C1218.9,922.6 1218.5,925.1 1217.9,927.5 C1217.4,929.9 1216.8,932.3 1216.1,934.7 C1215.5,937.1 1214.7,939.5 1213.9,941.9 C1213.1,944.3 1212.3,946.7 1211.3,949.0 C1210.4,951.3 1209.4,953.7 1208.4,956.0 C1207.3,958.3 1206.2,960.6 1205.0,962.8 C1203.8,965.1 1202.6,967.4 1201.3,969.6 C1200.0,971.8 1198.6,974.0 1197.2,976.2 C1195.7,978.4 1194.2,980.6 1192.7,982.7 C1191.1,984.8 1189.5,986.9 1187.9,989.0 C1186.2,991.1 1184.5,993.1 1182.7,995.2 C1180.9,997.2 1179.0,999.2 1177.1,1001.2 C1175.2,1003.1 1173.3,1005.1 1171.3,1007.0 C1169.3,1008.9 1167.2,1010.8 1165.1,1012.6 C1162.9,1014.5 1160.8,1016.3 1158.5,1018.1 C1156.3,1019.8 1154.0,1021.6 1151.7,1023.3 C1149.4,1025.0 1147.0,1026.7 1144.6,1028.3 C1142.1,1030.0 1139.7,1031.6 1137.1,1033.2 C1134.6,1034.7 1132.0,1036.3 1129.4,1037.8 C1126.8,1039.2 1124.2,1040.7 1121.5,1042.1 C1118.7,1043.5 1116.0,1044.9 1113.2,1046.2 C1110.4,1047.6 1107.6,1048.9 1104.7,1050.1 C1101.9,1051.4 1099.0,1052.6 1096.0,1053.8 C1093.1,1055.0 1090.1,1056.1 1087.1,1057.2 C1084.1,1058.3 1079.4,1059.8 1077.9,1060.3 L1000,1090 L850,1080 L761.2,1023.9 C758.4,1021.1 751.2,1013.5 744.4,1007.1 C737.6,1000.7 728.3,993.8 720.3,985.4 C712.3,977.0 703.7,966.9 696.2,956.6 C688.7,946.3 678.9,929.2 675.5,923.7 Z" fill="url(#gCone)"/>
<path d="M675.5,923.7 C674.9,922.5 673.2,918.8 672.2,916.3 C671.1,913.9 670.2,911.4 669.3,908.9 C668.3,906.4 667.5,903.9 666.7,901.4 C665.9,899.0 665.2,896.5 664.6,894.0 C663.9,891.5 663.4,888.9 662.8,886.4 C662.3,883.9 661.9,881.4 661.5,878.9 C661.1,876.4 660.8,873.9 660.5,871.4 C660.3,868.9 660.1,866.3 660.0,863.8 C659.9,861.3 659.8,858.8 659.8,856.3 C659.9,853.8 659.9,851.3 660.1,848.9 C660.2,846.4 660.5,843.9 660.7,841.4 C661.0,839.0 661.4,836.5 661.8,834.0 C662.2,831.6 662.7,829.2 663.2,826.7 C663.8,824.3 664.4,821.9 665.1,819.5 C665.8,817.1 666.5,814.7 667.3,812.3 C668.1,809.9 669.0,807.6 670.0,805.2 C670.9,802.9 671.9,800.6 673.0,798.3 C674.0,796.0 675.2,793.7 676.4,791.4 C677.6,789.1 678.8,786.9 680.2,784.7 C681.5,782.5 682.9,780.3 684.3,778.1 C685.7,775.9 687.3,773.7 688.8,771.6 C690.4,769.5 692.0,767.4 693.7,765.3 C695.4,763.2 697.1,761.2 698.9,759.2 C700.7,757.1 702.6,755.2 704.5,753.2 C706.4,751.2 708.4,749.3 710.4,747.4 C712.4,745.5 714.5,743.6 716.6,741.8 C718.8,739.9 721.0,738.1 723.2,736.4 C725.4,734.6 727.7,732.8 730.1,731.1 C732.4,729.4 734.8,727.8 737.2,726.1 C739.7,724.5 742.2,722.9 744.7,721.3 C747.2,719.8 749.8,718.2 752.4,716.8 C755.1,715.3 757.7,713.8 760.4,712.4 C763.1,711.0 765.9,709.6 768.7,708.3 C771.5,707.0 774.3,705.7 777.2,704.5 C780.1,703.2 783.0,702.0 786.0,700.8 C788.9,699.7 791.9,698.6 794.9,697.5 C797.9,696.4 801.0,695.4 804.1,694.4 C807.2,693.4 810.3,692.4 813.5,691.5 C816.6,690.6 819.8,689.8 823.0,688.9 C826.2,688.1 829.5,687.4 832.7,686.6 C836.0,685.9 839.3,685.2 842.6,684.6 C845.9,684.0 849.2,683.4 852.6,682.8 C856.0,682.3 859.3,681.8 862.7,681.4 C866.1,680.9 869.6,680.5 873.0,680.2 C876.4,679.8 879.9,679.5 883.3,679.2 C886.8,679.0 890.3,678.8 893.8,678.6 C897.2,678.4 900.7,678.3 904.2,678.2 C907.8,678.2 911.3,678.2 914.8,678.2 C918.3,678.2 921.8,678.3 925.4,678.4 C928.9,678.5 932.4,678.7 936.0,678.9 C939.5,679.1 943.0,679.4 946.6,679.7 C950.1,680.0 953.7,680.3 957.2,680.7 C960.7,681.1 964.2,681.6 967.8,682.1 C971.3,682.6 974.8,683.1 978.3,683.7 C981.8,684.3 985.3,684.9 988.8,685.6 C992.3,686.3 995.7,687.0 999.2,687.8 C1002.7,688.6 1006.1,689.4 1009.5,690.3 C1013.0,691.1 1016.4,692.0 1019.8,693.0 C1023.1,693.9 1026.5,694.9 1029.9,695.9 C1033.2,697.0 1036.6,698.1 1039.9,699.2 C1043.2,700.3 1046.5,701.5 1049.7,702.7 C1053.0,703.9 1056.2,705.1 1059.4,706.4 C1062.6,707.7 1065.8,709.0 1068.9,710.4 C1072.1,711.8 1075.2,713.2 1078.3,714.6 C1081.4,716.1 1084.4,717.6 1087.4,719.1 C1090.4,720.6 1093.4,722.2 1096.3,723.8 C1099.3,725.4 1102.2,727.0 1105.1,728.7 C1107.9,730.4 1110.7,732.1 1113.5,733.8 C1116.3,735.6 1119.1,737.3 1121.8,739.1 C1124.5,740.9 1127.1,742.8 1129.7,744.7 C1132.3,746.5 1134.9,748.4 1137.4,750.4 C1139.9,752.3 1142.4,754.3 1144.8,756.3 C1147.3,758.3 1149.6,760.3 1152.0,762.3 C1154.3,764.4 1156.6,766.5 1158.8,768.6 C1161.0,770.7 1163.2,772.8 1165.3,775.0 C1167.4,777.1 1169.5,779.3 1171.5,781.5 C1173.5,783.7 1175.5,785.9 1177.4,788.2 C1179.2,790.4 1181.1,792.7 1182.9,795.0 C1184.7,797.2 1186.4,799.5 1188.0,801.9 C1189.7,804.2 1191.3,806.5 1192.9,808.9 C1194.4,811.3 1195.9,813.6 1197.3,816.0 C1198.8,818.4 1200.1,820.8 1201.4,823.2 C1202.7,825.6 1204.0,828.1 1205.1,830.5 C1206.3,833.0 1207.4,835.4 1208.5,837.9 C1209.5,840.3 1210.5,842.8 1211.5,845.3 C1212.4,847.8 1213.2,850.2 1214.0,852.7 C1214.8,855.2 1215.5,857.7 1216.2,860.2 C1216.9,862.7 1217.5,865.2 1218.0,867.7 C1218.5,870.3 1219.0,872.8 1219.4,875.3 C1219.8,877.8 1220.1,880.3 1220.4,882.8 C1220.6,885.3 1220.8,887.8 1221.0,890.3 C1221.1,892.8 1221.2,895.3 1221.2,897.8 C1221.2,900.3 1221.1,902.8 1221.0,905.3 C1220.8,907.8 1220.6,910.3 1220.3,912.8 C1220.1,915.2 1219.7,917.7 1219.3,920.2 C1218.9,922.6 1218.5,925.1 1217.9,927.5 C1217.4,929.9 1216.8,932.3 1216.1,934.7 C1215.5,937.1 1214.7,939.5 1213.9,941.9 C1213.1,944.3 1212.3,946.7 1211.3,949.0 C1210.4,951.3 1209.4,953.7 1208.4,956.0 C1207.3,958.3 1206.2,960.6 1205.0,962.8 C1203.8,965.1 1202.6,967.4 1201.3,969.6 C1200.0,971.8 1198.6,974.0 1197.2,976.2 C1195.7,978.4 1194.2,980.6 1192.7,982.7 C1191.1,984.8 1189.5,986.9 1187.9,989.0 C1186.2,991.1 1184.5,993.1 1182.7,995.2 C1180.9,997.2 1179.0,999.2 1177.1,1001.2 C1175.2,1003.1 1173.3,1005.1 1171.3,1007.0 C1169.3,1008.9 1167.2,1010.8 1165.1,1012.6 C1162.9,1014.5 1160.8,1016.3 1158.5,1018.1 C1156.3,1019.8 1154.0,1021.6 1151.7,1023.3 C1149.4,1025.0 1147.0,1026.7 1144.6,1028.3 C1142.1,1030.0 1139.7,1031.6 1137.1,1033.2 C1134.6,1034.7 1132.0,1036.3 1129.4,1037.8 C1126.8,1039.2 1124.2,1040.7 1121.5,1042.1 C1118.7,1043.5 1116.0,1044.9 1113.2,1046.2 C1110.4,1047.6 1107.6,1048.9 1104.7,1050.1 C1101.9,1051.4 1099.0,1052.6 1096.0,1053.8 C1093.1,1055.0 1090.1,1056.1 1087.1,1057.2 C1084.1,1058.3 1079.4,1059.8 1077.9,1060.3 L1000,1090 L850,1080 L761.2,1023.9 C758.4,1021.1 751.2,1013.5 744.4,1007.1 C737.6,1000.7 728.3,993.8 720.3,985.4 C712.3,977.0 703.7,966.9 696.2,956.6 C688.7,946.3 678.9,929.2 675.5,923.7 Z" fill="url(#gConeL)"/>
<path d="M675.5,923.7 C674.9,922.5 673.2,918.8 672.2,916.3 C671.1,913.9 670.2,911.4 669.3,908.9 C668.3,906.4 667.5,903.9 666.7,901.4 C665.9,899.0 665.2,896.5 664.6,894.0 C663.9,891.5 663.4,888.9 662.8,886.4 C662.3,883.9 661.9,881.4 661.5,878.9 C661.1,876.4 660.8,873.9 660.5,871.4 C660.3,868.9 660.1,866.3 660.0,863.8 C659.9,861.3 659.8,858.8 659.8,856.3 C659.9,853.8 659.9,851.3 660.1,848.9 C660.2,846.4 660.5,843.9 660.7,841.4 C661.0,839.0 661.4,836.5 661.8,834.0 C662.2,831.6 662.7,829.2 663.2,826.7 C663.8,824.3 664.4,821.9 665.1,819.5 C665.8,817.1 666.5,814.7 667.3,812.3 C668.1,809.9 669.0,807.6 670.0,805.2 C670.9,802.9 671.9,800.6 673.0,798.3 C674.0,796.0 675.2,793.7 676.4,791.4 C677.6,789.1 678.8,786.9 680.2,784.7 C681.5,782.5 682.9,780.3 684.3,778.1 C685.7,775.9 687.3,773.7 688.8,771.6 C690.4,769.5 692.0,767.4 693.7,765.3 C695.4,763.2 697.1,761.2 698.9,759.2 C700.7,757.1 702.6,755.2 704.5,753.2 C706.4,751.2 708.4,749.3 710.4,747.4 C712.4,745.5 714.5,743.6 716.6,741.8 C718.8,739.9 721.0,738.1 723.2,736.4 C725.4,734.6 727.7,732.8 730.1,731.1 C732.4,729.4 734.8,727.8 737.2,726.1 C739.7,724.5 742.2,722.9 744.7,721.3 C747.2,719.8 749.8,718.2 752.4,716.8 C755.1,715.3 757.7,713.8 760.4,712.4 C763.1,711.0 765.9,709.6 768.7,708.3 C771.5,707.0 774.3,705.7 777.2,704.5 C780.1,703.2 783.0,702.0 786.0,700.8 C788.9,699.7 791.9,698.6 794.9,697.5 C797.9,696.4 801.0,695.4 804.1,694.4 C807.2,693.4 810.3,692.4 813.5,691.5 C816.6,690.6 819.8,689.8 823.0,688.9 C826.2,688.1 829.5,687.4 832.7,686.6 C836.0,685.9 839.3,685.2 842.6,684.6 C845.9,684.0 849.2,683.4 852.6,682.8 C856.0,682.3 859.3,681.8 862.7,681.4 C866.1,680.9 869.6,680.5 873.0,680.2 C876.4,679.8 879.9,679.5 883.3,679.2 C886.8,679.0 890.3,678.8 893.8,678.6 C897.2,678.4 900.7,678.3 904.2,678.2 C907.8,678.2 911.3,678.2 914.8,678.2 C918.3,678.2 921.8,678.3 925.4,678.4 C928.9,678.5 932.4,678.7 936.0,678.9 C939.5,679.1 943.0,679.4 946.6,679.7 C950.1,680.0 953.7,680.3 957.2,680.7 C960.7,681.1 964.2,681.6 967.8,682.1 C971.3,682.6 974.8,683.1 978.3,683.7 C981.8,684.3 985.3,684.9 988.8,685.6 C992.3,686.3 995.7,687.0 999.2,687.8 C1002.7,688.6 1006.1,689.4 1009.5,690.3 C1013.0,691.1 1016.4,692.0 1019.8,693.0 C1023.1,693.9 1026.5,694.9 1029.9,695.9 C1033.2,697.0 1036.6,698.1 1039.9,699.2 C1043.2,700.3 1046.5,701.5 1049.7,702.7 C1053.0,703.9 1056.2,705.1 1059.4,706.4 C1062.6,707.7 1065.8,709.0 1068.9,710.4 C1072.1,711.8 1075.2,713.2 1078.3,714.6 C1081.4,716.1 1084.4,717.6 1087.4,719.1 C1090.4,720.6 1093.4,722.2 1096.3,723.8 C1099.3,725.4 1102.2,727.0 1105.1,728.7 C1107.9,730.4 1110.7,732.1 1113.5,733.8 C1116.3,735.6 1119.1,737.3 1121.8,739.1 C1124.5,740.9 1127.1,742.8 1129.7,744.7 C1132.3,746.5 1134.9,748.4 1137.4,750.4 C1139.9,752.3 1142.4,754.3 1144.8,756.3 C1147.3,758.3 1149.6,760.3 1152.0,762.3 C1154.3,764.4 1156.6,766.5 1158.8,768.6 C1161.0,770.7 1163.2,772.8 1165.3,775.0 C1167.4,777.1 1169.5,779.3 1171.5,781.5 C1173.5,783.7 1175.5,785.9 1177.4,788.2 C1179.2,790.4 1181.1,792.7 1182.9,795.0 C1184.7,797.2 1186.4,799.5 1188.0,801.9 C1189.7,804.2 1191.3,806.5 1192.9,808.9 C1194.4,811.3 1195.9,813.6 1197.3,816.0 C1198.8,818.4 1200.1,820.8 1201.4,823.2 C1202.7,825.6 1204.0,828.1 1205.1,830.5 C1206.3,833.0 1207.4,835.4 1208.5,837.9 C1209.5,840.3 1210.5,842.8 1211.5,845.3 C1212.4,847.8 1213.2,850.2 1214.0,852.7 C1214.8,855.2 1215.5,857.7 1216.2,860.2 C1216.9,862.7 1217.5,865.2 1218.0,867.7 C1218.5,870.3 1219.0,872.8 1219.4,875.3 C1219.8,877.8 1220.1,880.3 1220.4,882.8 C1220.6,885.3 1220.8,887.8 1221.0,890.3 C1221.1,892.8 1221.2,895.3 1221.2,897.8 C1221.2,900.3 1221.1,902.8 1221.0,905.3 C1220.8,907.8 1220.6,910.3 1220.3,912.8 C1220.1,915.2 1219.7,917.7 1219.3,920.2 C1218.9,922.6 1218.5,925.1 1217.9,927.5 C1217.4,929.9 1216.8,932.3 1216.1,934.7 C1215.5,937.1 1214.7,939.5 1213.9,941.9 C1213.1,944.3 1212.3,946.7 1211.3,949.0 C1210.4,951.3 1209.4,953.7 1208.4,956.0 C1207.3,958.3 1206.2,960.6 1205.0,962.8 C1203.8,965.1 1202.6,967.4 1201.3,969.6 C1200.0,971.8 1198.6,974.0 1197.2,976.2 C1195.7,978.4 1194.2,980.6 1192.7,982.7 C1191.1,984.8 1189.5,986.9 1187.9,989.0 C1186.2,991.1 1184.5,993.1 1182.7,995.2 C1180.9,997.2 1179.0,999.2 1177.1,1001.2 C1175.2,1003.1 1173.3,1005.1 1171.3,1007.0 C1169.3,1008.9 1167.2,1010.8 1165.1,1012.6 C1162.9,1014.5 1160.8,1016.3 1158.5,1018.1 C1156.3,1019.8 1154.0,1021.6 1151.7,1023.3 C1149.4,1025.0 1147.0,1026.7 1144.6,1028.3 C1142.1,1030.0 1139.7,1031.6 1137.1,1033.2 C1134.6,1034.7 1132.0,1036.3 1129.4,1037.8 C1126.8,1039.2 1124.2,1040.7 1121.5,1042.1 C1118.7,1043.5 1116.0,1044.9 1113.2,1046.2 C1110.4,1047.6 1107.6,1048.9 1104.7,1050.1 C1101.9,1051.4 1099.0,1052.6 1096.0,1053.8 C1093.1,1055.0 1090.1,1056.1 1087.1,1057.2 C1084.1,1058.3 1079.4,1059.8 1077.9,1060.3 L1000,1090 L850,1080 L761.2,1023.9 C758.4,1021.1 751.2,1013.5 744.4,1007.1 C737.6,1000.7 728.3,993.8 720.3,985.4 C712.3,977.0 703.7,966.9 696.2,956.6 C688.7,946.3 678.9,929.2 675.5,923.7 Z" fill="url(#gConeBR)"/>
<path d="M675.5,923.7 C674.9,922.5 673.2,918.8 672.2,916.3 C671.1,913.9 670.2,911.4 669.3,908.9 C668.3,906.4 667.5,903.9 666.7,901.4 C665.9,899.0 665.2,896.5 664.6,894.0 C663.9,891.5 663.4,888.9 662.8,886.4 C662.3,883.9 661.9,881.4 661.5,878.9 C661.1,876.4 660.8,873.9 660.5,871.4 C660.3,868.9 660.1,866.3 660.0,863.8 C659.9,861.3 659.8,858.8 659.8,856.3 C659.9,853.8 659.9,851.3 660.1,848.9 C660.2,846.4 660.5,843.9 660.7,841.4 C661.0,839.0 661.4,836.5 661.8,834.0 C662.2,831.6 662.7,829.2 663.2,826.7 C663.8,824.3 664.4,821.9 665.1,819.5 C665.8,817.1 666.5,814.7 667.3,812.3 C668.1,809.9 669.0,807.6 670.0,805.2 C670.9,802.9 671.9,800.6 673.0,798.3 C674.0,796.0 675.2,793.7 676.4,791.4 C677.6,789.1 678.8,786.9 680.2,784.7 C681.5,782.5 682.9,780.3 684.3,778.1 C685.7,775.9 687.3,773.7 688.8,771.6 C690.4,769.5 692.0,767.4 693.7,765.3 C695.4,763.2 697.1,761.2 698.9,759.2 C700.7,757.1 702.6,755.2 704.5,753.2 C706.4,751.2 708.4,749.3 710.4,747.4 C712.4,745.5 714.5,743.6 716.6,741.8 C718.8,739.9 721.0,738.1 723.2,736.4 C725.4,734.6 727.7,732.8 730.1,731.1 C732.4,729.4 734.8,727.8 737.2,726.1 C739.7,724.5 742.2,722.9 744.7,721.3 C747.2,719.8 749.8,718.2 752.4,716.8 C755.1,715.3 757.7,713.8 760.4,712.4 C763.1,711.0 765.9,709.6 768.7,708.3 C771.5,707.0 774.3,705.7 777.2,704.5 C780.1,703.2 783.0,702.0 786.0,700.8 C788.9,699.7 791.9,698.6 794.9,697.5 C797.9,696.4 801.0,695.4 804.1,694.4 C807.2,693.4 810.3,692.4 813.5,691.5 C816.6,690.6 819.8,689.8 823.0,688.9 C826.2,688.1 829.5,687.4 832.7,686.6 C836.0,685.9 839.3,685.2 842.6,684.6 C845.9,684.0 849.2,683.4 852.6,682.8 C856.0,682.3 859.3,681.8 862.7,681.4 C866.1,680.9 869.6,680.5 873.0,680.2 C876.4,679.8 879.9,679.5 883.3,679.2 C886.8,679.0 890.3,678.8 893.8,678.6 C897.2,678.4 900.7,678.3 904.2,678.2 C907.8,678.2 911.3,678.2 914.8,678.2 C918.3,678.2 921.8,678.3 925.4,678.4 C928.9,678.5 932.4,678.7 936.0,678.9 C939.5,679.1 943.0,679.4 946.6,679.7 C950.1,680.0 953.7,680.3 957.2,680.7 C960.7,681.1 964.2,681.6 967.8,682.1 C971.3,682.6 974.8,683.1 978.3,683.7 C981.8,684.3 985.3,684.9 988.8,685.6 C992.3,686.3 995.7,687.0 999.2,687.8 C1002.7,688.6 1006.1,689.4 1009.5,690.3 C1013.0,691.1 1016.4,692.0 1019.8,693.0 C1023.1,693.9 1026.5,694.9 1029.9,695.9 C1033.2,697.0 1036.6,698.1 1039.9,699.2 C1043.2,700.3 1046.5,701.5 1049.7,702.7 C1053.0,703.9 1056.2,705.1 1059.4,706.4 C1062.6,707.7 1065.8,709.0 1068.9,710.4 C1072.1,711.8 1075.2,713.2 1078.3,714.6 C1081.4,716.1 1084.4,717.6 1087.4,719.1 C1090.4,720.6 1093.4,722.2 1096.3,723.8 C1099.3,725.4 1102.2,727.0 1105.1,728.7 C1107.9,730.4 1110.7,732.1 1113.5,733.8 C1116.3,735.6 1119.1,737.3 1121.8,739.1 C1124.5,740.9 1127.1,742.8 1129.7,744.7 C1132.3,746.5 1134.9,748.4 1137.4,750.4 C1139.9,752.3 1142.4,754.3 1144.8,756.3 C1147.3,758.3 1149.6,760.3 1152.0,762.3 C1154.3,764.4 1156.6,766.5 1158.8,768.6 C1161.0,770.7 1163.2,772.8 1165.3,775.0 C1167.4,777.1 1169.5,779.3 1171.5,781.5 C1173.5,783.7 1175.5,785.9 1177.4,788.2 C1179.2,790.4 1181.1,792.7 1182.9,795.0 C1184.7,797.2 1186.4,799.5 1188.0,801.9 C1189.7,804.2 1191.3,806.5 1192.9,808.9 C1194.4,811.3 1195.9,813.6 1197.3,816.0 C1198.8,818.4 1200.1,820.8 1201.4,823.2 C1202.7,825.6 1204.0,828.1 1205.1,830.5 C1206.3,833.0 1207.4,835.4 1208.5,837.9 C1209.5,840.3 1210.5,842.8 1211.5,845.3 C1212.4,847.8 1213.2,850.2 1214.0,852.7 C1214.8,855.2 1215.5,857.7 1216.2,860.2 C1216.9,862.7 1217.5,865.2 1218.0,867.7 C1218.5,870.3 1219.0,872.8 1219.4,875.3 C1219.8,877.8 1220.1,880.3 1220.4,882.8 C1220.6,885.3 1220.8,887.8 1221.0,890.3 C1221.1,892.8 1221.2,895.3 1221.2,897.8 C1221.2,900.3 1221.1,902.8 1221.0,905.3 C1220.8,907.8 1220.6,910.3 1220.3,912.8 C1220.1,915.2 1219.7,917.7 1219.3,920.2 C1218.9,922.6 1218.5,925.1 1217.9,927.5 C1217.4,929.9 1216.8,932.3 1216.1,934.7 C1215.5,937.1 1214.7,939.5 1213.9,941.9 C1213.1,944.3 1212.3,946.7 1211.3,949.0 C1210.4,951.3 1209.4,953.7 1208.4,956.0 C1207.3,958.3 1206.2,960.6 1205.0,962.8 C1203.8,965.1 1202.6,967.4 1201.3,969.6 C1200.0,971.8 1198.6,974.0 1197.2,976.2 C1195.7,978.4 1194.2,980.6 1192.7,982.7 C1191.1,984.8 1189.5,986.9 1187.9,989.0 C1186.2,991.1 1184.5,993.1 1182.7,995.2 C1180.9,997.2 1179.0,999.2 1177.1,1001.2 C1175.2,1003.1 1173.3,1005.1 1171.3,1007.0 C1169.3,1008.9 1167.2,1010.8 1165.1,1012.6 C1162.9,1014.5 1160.8,1016.3 1158.5,1018.1 C1156.3,1019.8 1154.0,1021.6 1151.7,1023.3 C1149.4,1025.0 1147.0,1026.7 1144.6,1028.3 C1142.1,1030.0 1139.7,1031.6 1137.1,1033.2 C1134.6,1034.7 1132.0,1036.3 1129.4,1037.8 C1126.8,1039.2 1124.2,1040.7 1121.5,1042.1 C1118.7,1043.5 1116.0,1044.9 1113.2,1046.2 C1110.4,1047.6 1107.6,1048.9 1104.7,1050.1 C1101.9,1051.4 1099.0,1052.6 1096.0,1053.8 C1093.1,1055.0 1090.1,1056.1 1087.1,1057.2 C1084.1,1058.3 1079.4,1059.8 1077.9,1060.3" fill="none" stroke="#2a2a2a" stroke-width="1.4"/>
<path d="M766.1,1002.9 L1079.2,1018.9 L1073.2,1079.0 L755.4,1052.9 Z" fill="url(#gBoss)"/>
<path d="M1078.51,1035.21 A157.5,110.8 8.4 1 1 766.89,989.19 A157.5,110.8 8.4 1 1 1078.51,1035.21 Z" fill="url(#gBoss)" stroke="#2a2a2a" stroke-width="1.4"/>
<path d="M767,990 L761,1026 M1077.5,1030 L1073.5,1070" fill="none" stroke="#2a2a2a" stroke-width="1.2" stroke-dasharray="3 2"/>
<path d="M1072.62,1094.30 A160.0,106.9 8.3 1 1 755.98,1048.10 A160.0,106.9 8.3 1 1 1072.62,1094.30 Z" fill="url(#gFace)" stroke="#2a2a2a" stroke-width="1.4"/>
<path d="M1003.21,1082.79 A89.5,60.5 6.6 1 1 825.39,1062.21 A89.5,60.5 6.6 1 1 1003.21,1082.79 Z" fill="url(#gHole)" />
<path d="M1003.21,1082.79 A89.5,60.5 6.6 1 1 825.39,1062.21 A89.5,60.5 6.6 1 1 1003.21,1082.79 Z" fill="url(#gHoleEdge)" stroke="#2a2a2a" stroke-width="1.4"/>
<ellipse cx="954.6" cy="1130.2" rx="17.6" ry="10.9" transform="rotate(5 954.6 1130.2)" fill="none" stroke="#404040" stroke-opacity="0.6" stroke-width="4.2" filter="url(#fBlur)"/>
<path d="M324.1,1744.1L-1339.8,231.0M349.1,1738.2L-1306.8,216.9M374.3,1732.3L-1273.6,202.7M399.6,1726.4L-1240.2,188.4M450.5,1714.4L-1172.6,159.5M476.1,1708.4L-1138.5,144.8M501.8,1702.4L-1104.2,130.1M527.6,1696.3L-1069.6,115.3M579.6,1684.1L-999.7,85.4M605.8,1677.9L-964.4,70.3M632.1,1671.7L-928.9,55.1M658.5,1665.5L-893.1,39.8M711.7,1653.0L-820.7,8.8M738.5,1646.7L-784.2,-6.9M765.3,1640.4L-747.4,-22.6M792.4,1634.1L-710.3,-38.5M846.7,1621.3L-635.4,-70.6M874.1,1614.8L-597.5,-86.8M901.6,1608.4L-559.4,-103.1M929.3,1601.9L-520.9,-119.6M984.9,1588.8L-443.3,-152.8M1012.9,1582.2L-404.0,-169.6M1041.0,1575.6L-364.5,-186.6M1069.3,1569.0L-324.6,-203.6M1126.2,1555.6L-244.0,-238.1M1154.9,1548.8L-203.3,-255.6M1183.7,1542.1L-162.3,-273.1M1212.6,1535.3L-120.9,-290.8M1270.9,1521.6L-37.3,-326.6M1300.3,1514.7L5.0,-344.8M1329.7,1507.7L47.6,-363.0M1359.4,1500.8L90.5,-381.4M1419.0,1486.7L177.4,-418.6M1449.1,1479.7L221.3,-437.4M1479.3,1472.6L265.6,-456.3M1509.6,1465.5L310.2,-475.4M1570.7,1451.1L400.5,-514.1M1601.5,1443.9L446.2,-533.7M1632.4,1436.6L492.2,-553.4M1663.5,1429.3L538.6,-573.2M1726.1,1414.6L632.5,-613.4M1757.6,1407.2L680.1,-633.8M1789.3,1399.7L728.0,-654.3M1821.1,1392.2L776.3,-675.0M1885.3,1377.2L874.0,-716.9M1917.6,1369.6L923.5,-738.0M1950.0,1361.9L973.4,-759.4M1982.7,1354.3L1023.7,-780.9M2048.4,1338.8L1125.6,-824.6M2081.5,1331.0L1177.2,-846.6M2114.8,1323.2L1229.2,-868.9M2148.3,1315.3L1281.6,-891.4M2215.7,1299.5L1387.9,-936.9M2249.7,1291.5L1441.7,-959.9M2283.8,1283.5L1495.9,-983.1M2318.1,1275.4L1550.7,-1006.6M282.3,1734.8L2345.8,1246.3M265.3,1719.5L2338.9,1225.1M248.1,1704.0L2331.9,1203.6M230.7,1688.3L2324.8,1181.8M195.3,1656.5L2310.4,1137.4M177.3,1640.3L2303.0,1114.8M159.1,1623.9L2295.5,1091.8M140.7,1607.4L2288.0,1068.6M103.3,1573.7L2272.6,1021.1M84.3,1556.5L2264.7,996.9M65.0,1539.2L2256.7,972.3M45.6,1521.7L2248.6,947.4M5.9,1486.0L2232.1,896.6M-14.2,1467.9L2223.7,870.6M-34.6,1449.5L2215.1,844.3M-55.3,1430.9L2206.4,817.6M-97.3,1393.1L2188.7,763.0M-118.7,1373.8L2179.6,735.1M-140.4,1354.3L2170.4,706.8M-162.3,1334.5L2161.1,678.1M-207.0,1294.3L2142.0,619.3M-229.8,1273.8L2132.2,589.3M-252.8,1253.1L2122.3,558.8M-276.2,1232.0L2112.2,527.8M-323.8,1189.2L2091.6,464.4M-348.0,1167.4L2081.1,431.9M-372.6,1145.2L2070.4,398.9M-397.5,1122.8L2059.5,365.4M-448.3,1077.1L2037.1,296.7M-474.2,1053.8L2025.7,261.5M-500.4,1030.2L2014.1,225.8M-527.0,1006.2L2002.3,189.4M-581.4,957.3L1978.0,114.8M-609.1,932.4L1965.6,76.5M-637.2,907.1L1952.9,37.6M-665.7,881.4L1940.0,-2.0M-723.9,829.0L1913.6,-83.4M-753.6,802.2L1900.0,-125.1M-783.8,775.1L1886.2,-167.7M-814.4,747.5L1872.1,-211.0M-876.9,691.2L1843.2,-300.0M-908.9,662.4L1828.3,-345.8M-941.4,633.2L1813.2,-392.4M-974.3,603.5L1797.7,-440.0M-1041.7,542.8L1765.9,-537.8M-1076.2,511.8L1749.5,-588.2M-1111.2,480.3L1732.8,-639.6M-1146.8,448.3L1715.8,-692.0M-1219.7,382.7L1680.7,-800.1M-1257.0,349.1L1662.5,-855.8M-1294.9,315.0L1644.1,-912.7M-1333.4,280.3L1625.2,-970.8" stroke="#000" stroke-opacity="0.07" stroke-width="1" fill="none"/>
<path d="M299.2,1750.0L-1372.5,245.0M425.0,1720.4L-1206.5,174.0M553.6,1690.2L-1034.8,100.4M685.0,1659.3L-857.0,24.3M819.5,1627.7L-673.0,-54.5M957.0,1595.4L-482.2,-136.1M1097.7,1562.3L-284.5,-220.8M1389.1,1493.8L133.8,-399.9M1540.1,1458.3L355.2,-494.7M1694.7,1421.9L585.4,-593.3M1853.1,1384.7L825.0,-695.8M2015.5,1346.5L1074.5,-802.7M2181.9,1307.4L1334.5,-914.0M2352.6,1267.3L1605.9,-1030.2M299.2,1750.0L2352.6,1267.3M213.1,1672.5L2317.6,1159.8M122.1,1590.6L2280.3,1045.0M25.9,1504.0L2240.4,922.2M-184.5,1314.5L2151.6,648.9M-299.8,1210.8L2102.0,496.3M-422.7,1100.1L2048.4,331.3M-554.0,981.9L1990.2,152.4M-694.6,855.4L1926.9,-42.3M-845.4,719.6L1857.8,-255.1M-1007.8,573.4L1782.0,-488.4M-1182.9,415.7L1698.4,-745.5M-1372.5,245.0L1605.9,-1030.2" stroke="#000" stroke-opacity="0.14" stroke-width="1" fill="none"/>
<path d="M1241.7,1528.4L-79.3,-308.7" stroke="#f08a8a" stroke-width="1" fill="none"/>
<path d="M-76.2,1412.1L2197.6,790.5" stroke="#8ae08a" stroke-width="1" fill="none"/>
<path d="M960,676 C1000,600 1080,520 1144,488.3 C1200,455 1300,405 1422,393.4 C1480,392 1520,400 1540,409" fill="none" stroke="#000" stroke-opacity="0.07" stroke-width="1"/>
<path d="M1422.2,281 V393.4" fill="none" stroke="#000" stroke-opacity="0.07" stroke-width="1"/>
</svg>
<svg style="position:absolute;left:0;top:0" width="1540" height="1246" viewBox="0 0 1540 1246" font-family="Liberation Sans, sans-serif">
<rect x="0" y="0" width="1540" height="168" fill="#f2f2f2"/>
<rect x="0" y="160.6" width="1540" height="1.6" fill="#c8c8c8"/>
<rect x="5.5" y="20" width="218.5" height="120" rx="7" fill="#f2f2f2" stroke="#cacaca" stroke-width="1.6"/>
<text x="62.1" y="87.4" font-size="23" font-weight="bold" fill="#3a3a3a" textLength="85.2" lengthAdjust="spacingAndGlyphs">DESIGN</text>
<path d="M158,75.5 L170,75.5 L164,84 Z" fill="#333"/>
<g font-size="23" fill="#3c3c3c">
<text x="280.4" y="29.4" fill="#0696d7" textLength="65.2" lengthAdjust="spacingAndGlyphs">SOLID</text>
<text x="437.0" y="29.0" textLength="97.0" lengthAdjust="spacingAndGlyphs">SURFACE</text>
<text x="623.4" y="29.0" textLength="59.9" lengthAdjust="spacingAndGlyphs">MESH</text>
<text x="768.6" y="29.0" textLength="146.7" lengthAdjust="spacingAndGlyphs">SHEET METAL</text>
<text x="1005.3" y="29.0" textLength="87.6" lengthAdjust="spacingAndGlyphs">PLASTIC</text>
<text x="1181.5" y="29.0" textLength="94.8" lengthAdjust="spacingAndGlyphs">MANAGE</text>
<text x="1367.3" y="29.0" textLength="98.7" lengthAdjust="spacingAndGlyphs">UTILITIES</text>
<text x="446.9" y="149.6" textLength="84.1" lengthAdjust="spacingAndGlyphs">CREATE</text>
<text x="984.8" y="149.6" textLength="85.8" lengthAdjust="spacingAndGlyphs">MODIFY</text>
<text x="1427.7" y="148.8" textLength="108.2" lengthAdjust="spacingAndGlyphs">ASSEMBLE</text>
</g>
<rect x="259" y="39" width="112" height="6" fill="#0696d7"/>
<path d="M536,137 L548.3,137 L542.2,143.6 Z M1076.9,137 L1088.5,137 L1082.7,143.6 Z" fill="#333"/>
<rect x="769" y="51" width="2" height="101" fill="#cccccc"/>
<rect x="1307" y="51" width="2" height="101" fill="#cccccc"/>
<!-- sketch icon -->
<g fill="#666">
<rect x="256" y="52" width="6" height="6"/><rect x="310" y="52" width="6" height="6"/><rect x="256" y="106" width="6" height="6"/>
<rect x="270" y="66" width="6" height="6"/><rect x="296" y="66" width="6" height="6"/><rect x="270" y="92" width="6" height="6"/>
</g>
<path d="M264,55 H308 M259,60 V104 M313,60 V87.5 M264,109 H292 M278,69 H294 M273,74 V90 M299.5,74 Q297,94 278.4,95.6" stroke="#666" stroke-width="1.7" fill="none"/>
<path d="M302,88 h8 v9.8 h10 v8 h-10 v10 h-8 v-10 h-10 v-8 h10 Z" fill="#23aa4b" stroke="#1b8f3c" stroke-width="0.8"/>
<!-- extrude -->
<path d="M343.8,64 L356.3,52.3 L391.7,52.3 L379.9,64 Z" fill="#8ecbf7"/>
<path d="M343.8,64 H379.9 V105.4 H343.8 Z" fill="#6aafe4"/>
<path d="M379.9,64 L391.7,52.3 V93.4 L379.9,105.4 Z" fill="#4a92cf"/>
<path d="M343.8,108 H379.9 V116 H343.8 Z" fill="#b2b2b2"/>
<path d="M379.9,108 L391.7,96.5 V104.5 L379.9,116 Z" fill="#9b9b9b"/>
<path d="M398.9,61 V104" stroke="#222" stroke-width="1.8"/><path d="M394,62 L404,62 L398.9,53.4 Z" fill="#222"/>
<!-- revolve -->
<path d="M487,66.6 Q462,48 434,63" stroke="#333" stroke-width="1.7" fill="none"/><path d="M428.6,67.7 L437,58 L439,68 Z" fill="#333"/>
<path d="M427.8,78.3 Q459.4,56 490.3,76.7 L478.9,88.8 Q459.4,76 440,88.8 Z" fill="#8ecbf7"/>
<path d="M440,88.8 Q459.4,76 478.9,88.8 V108 Q459.4,96 440,110 Z" fill="#6aafe4"/>
<path d="M427.8,78.3 L440,88.8 V110 L427.8,98 Z" fill="#4a92cf"/>
<path d="M481,89 L491,80 V100 L481,108.5 Z" fill="#f2f2f2" stroke="#555" stroke-width="1.6"/>
<!-- hole -->
<path d="M514.4,64.1 L526.2,52.3 H577.7 L565.8,64.1 Z" fill="#f7f7f7" stroke="#606060" stroke-width="1.3"/>
<path d="M514.4,64.1 H565.8 V115 H514.4 Z" fill="#d9d9d9" stroke="#606060" stroke-width="1.3"/>
<path d="M565.8,64.1 L577.7,52.3 V103.2 L565.8,115 Z" fill="#b9b9b9" stroke="#606060" stroke-width="1.3"/>
<circle cx="541" cy="88.6" r="15.5" fill="#fff" stroke="#555" stroke-width="1.3"/>
<circle cx="541" cy="88.6" r="12.5" fill="#65abe0" stroke="#4a8fc8" stroke-width="0.8"/>
<path d="M537.5,77 Q540,90 554,89.5 Q554,76 537.5,77 Z" fill="#fff"/>
<!-- pattern -->
<rect x="601" y="57" width="12.6" height="12.6" fill="#fff" stroke="#555" stroke-width="1.5"/>
<g fill="#65abe0" stroke="#4a8fc8" stroke-width="0.8"><rect x="642.2" y="56.5" width="13.5" height="13"/><rect x="600.5" y="98.2" width="13.5" height="13.5"/><rect x="642.2" y="98.2" width="13.5" height="13.5"/></g>
<path d="M616.5,62.7 H639.8 M606.9,72 V95.6 M616.5,105 H639.8" stroke="#555" stroke-width="1.6"/>
<!-- form -->
<path d="M686.6,80 Q686.6,73 693,67 L700,59.5 Q703,56.5 708,56.5 H726 Q731,56.5 736,61 L742,67 Q745.6,71 745.6,77 V101 Q745.6,106 741,110.5 L737,114 Q734,116 729,116 H695 Q686.6,116 686.6,107 Z" fill="#9c72d6" stroke="#7a52b6" stroke-width="1.2"/>
<path d="M689.5,76 L701,62 Q703,59.5 707,59.5 H727 Q731,59.5 733,62 L729.5,75 Z" fill="#caa9f2"/>
<path d="M689.5,78 Q689.5,75 693,75 H727 Q730,75 730,78 V110 Q730,113.5 726,113.5 H693.5 Q689.5,113.5 689.5,109.5 Z" fill="#ab82e0"/>
<path d="M731,76 L743,71 V101 Q743,105 739,109 L731,113 Z" fill="#8c61c8"/>
<path d="M689.5,92 Q710,96 731,92 L743,87 M709,60 V113.5 M737,73 V110" fill="none" stroke="#7a52b6" stroke-width="1.1" opacity="0.85"/>
<path d="M733,52.6 L735.6,63 L745,57 L739.5,66.5 L749,68.6 L739.5,71 L745,80 L735.6,74.5 L733,84.6 L730.4,74.5 L721,80 L726.5,71 L717,68.6 L726.5,66.5 L721,57 L730.4,63 Z" fill="#f5a800" stroke="#fff" stroke-width="1.2"/>
<!-- press pull -->
<path d="M796.4,115 V64.1 L807.9,52.3 H818.8" fill="none" stroke="#555" stroke-width="1.4"/>
<path d="M797.2,64.8 H808 V114.3 H797.2 Z" fill="#d8d8d8"/>
<path d="M796.4,115 H808" stroke="#555" stroke-width="1.4"/>
<path d="M810.4,64.1 L822.2,52.3 H839.9 L828.1,64.1 Z" fill="#8ecbf7"/>
<path d="M810.4,64.1 H828.1 V115 H810.4 Z" fill="#6aafe4"/>
<path d="M828.1,64.1 L839.9,52.3 V103.2 L828.1,115 Z" fill="#4a92cf"/>
<rect x="834" y="79.5" width="6" height="7" fill="#fff"/>
<path d="M836.6,83 H847.5" stroke="#222" stroke-width="1.8"/><path d="M845.8,77.9 L854.3,83 L845.8,88.1 Z" fill="#222"/>
<!-- fillet -->
<path d="M880.5,67 L895.7,52.3 H913.4 L903.2,65.8 Q925,66 930.3,92.3 L943.4,80 V100.7 L928.6,115 H880.5 Z" fill="#d9d9d9" stroke="#555" stroke-width="1.3"/>
<path d="M928.6,115 V95" stroke="#555" stroke-width="0"/>
<path d="M928.6,96 L943.4,82 V100.7 L928.6,115 Z" fill="#b8b8b8"/>
<path d="M880.5,67 H903.2 Q925,68 928.6,96 V115 H880.5 Z" fill="#d9d9d9"/>
<path d="M880.5,67 L895.7,52.3 H913.4 M943.4,82 V100.7 L928.6,115 H880.5 V67" fill="none" stroke="#555" stroke-width="1.3"/>
<path d="M903.2,65.8 L916.5,52.5 Q940,57 943.4,79.6 L930.3,92.3 Q926,68 903.2,65.8 Z" fill="#65abe0" stroke="#4a8fc8" stroke-width="0.9"/>
<!-- shell -->
<path d="M966.6,67.5 L981.8,52.3 H1029.5 L1014.3,67.5 Z" fill="#f7f7f7" stroke="#555" stroke-width="1.3"/>
<path d="M966.6,67.5 H1014.3 V115 H966.6 Z" fill="#d9d9d9" stroke="#555" stroke-width="1.3"/>
<path d="M1014.3,67.5 L1029.5,52.3 V99.9 L1014.3,115 Z" fill="#b8b8b8" stroke="#555" stroke-width="1.3"/>
<rect x="972.1" y="74" width="35.8" height="35.7" fill="#f2f2f2"/>
<path d="M974.2,75.9 H989.9 V92 L974.2,106.6 Z" fill="#4a92cf"/>
<path d="M989.9,92 H1006 V107 H974.2 Z" fill="#8ecbf7"/>
<!-- combine -->
<path d="M1072.1,60.2 L1080.5,52.3 H1116 L1108.4,60.2 Z M1052.2,80.1 L1060,72 H1072.1 V80.1 Z" fill="#8ecbf7"/>
<path d="M1072.1,60.2 H1108.4 V95.3 H1088.1 V115.6 H1052.2 V80.1 H1072.1 Z" fill="#6aafe4" stroke="#5a9fd6" stroke-width="0.6"/>
<path d="M1108.4,60.2 L1116,52.3 V88 L1108.4,95.3 Z M1088.1,95.3 L1095.7,88 V108.3 L1088.1,115.6 Z" fill="#4a92cf"/>
<!-- split -->
<path d="M1142.1,64.1 L1154,52.3 H1197.9 L1186,64.1 Z" fill="#8ecbf7"/>
<path d="M1142.1,64.1 H1186 V83.8 H1142.1 Z" fill="#6aafe4"/>
<path d="M1186,64.1 L1197.9,52.3 V71 L1186,83.8 Z" fill="#4a92cf"/>
<path d="M1137.9,89.2 H1186.5 L1201.7,73" fill="none" stroke="#1a88e0" stroke-width="1.9"/>
<path d="M1142.1,94 H1186 V113.4 H1142.1 Z" fill="#d9d9d9"/>
<path d="M1186,94 L1197.9,84.7 V102.4 L1186,113.4 Z" fill="#b8b8b8"/>
<path d="M1142.1,94 V113.4 H1186 L1197.9,102.4 V84.7" fill="none" stroke="#555" stroke-width="1.4"/>
<!-- move -->
<path d="M1256.1,52.3 L1266,68 H1258.2 V81.7 H1272 V73.8 L1287.8,83.8 L1272,93.8 V85.9 H1258.2 V99.6 H1266 L1256.1,115.6 L1246.2,99.6 H1254 V85.9 H1240.2 V93.8 L1224,83.8 L1240.2,73.8 V81.7 H1254 V68 H1246.2 Z" fill="#333"/>
<!-- assemble 1 -->
<path d="M1346,70 L1355,60.3 H1391.5 L1376,75.7 H1346 Z" fill="#f7f7f7"/>
<path d="M1340.3,75.7 H1376 V111.4 H1340.3 Z" fill="#d9d9d9"/>
<path d="M1376,75.7 L1391.5,60.3 V93.6 L1376,108.2 Z" fill="#b8b8b8"/>
<path d="M1360,60.3 H1391.5 V93.6 M1340.3,75.7 V111.4 H1365" fill="none" stroke="#555" stroke-width="1.3"/>
<path d="M1331.9,60.3 H1348.4 V52.2 L1367.6,64 L1348.4,75.7 V67.6 H1331.9 Z" fill="#1a88e0" stroke="#f2f2f2" stroke-width="0.8"/>
<g transform="translate(1381 99.5) rotate(-45)">
<rect x="-17" y="-6.5" width="19" height="13" rx="6.5" fill="none" stroke="#f2f2f2" stroke-width="7"/>
<rect x="-2" y="-6.5" width="19" height="13" rx="6.5" fill="none" stroke="#f2f2f2" stroke-width="7"/>
<rect x="-17" y="-6.5" width="19" height="13" rx="6.5" fill="none" stroke="#333" stroke-width="3.8"/>
<rect x="-2" y="-6.5" width="19" height="13" rx="6.5" fill="none" stroke="#333" stroke-width="3.8"/>
</g>
<!-- assemble 2 -->
<path d="M1418.2,67.9 L1423.9,60.3 H1449.9 L1442.3,67.9 Z" fill="#8ecbf7"/>
<path d="M1418.2,67.9 H1442.3 V91.6 H1418.2 Z" fill="#6aafe4"/>
<path d="M1442.3,67.9 L1449.9,60.3 V84 L1442.3,91.6 Z" fill="#4a92cf"/>
<path d="M1442.3,91.6 L1449.9,84.2 H1473.4 L1466.1,91.6 Z" fill="#f7f7f7" stroke="#555" stroke-width="1.2"/>
<path d="M1418.2,91.6 H1466.1 V115 H1418.2 Z" fill="#d9d9d9" stroke="#555" stroke-width="1.3"/>
<path d="M1466.1,91.6 L1473.4,84.2 V107.4 L1466.1,115 Z" fill="#b8b8b8" stroke="#555" stroke-width="1.2"/>
<path d="M1442.3,91.6 V115" stroke="#555" stroke-width="1.3"/>
<path d="M1465.0,52.4 L1467.5,62.9 L1476.7,57.2 L1471.0,66.4 L1481.5,68.9 L1471.0,71.4 L1476.7,80.6 L1467.5,74.9 L1465.0,85.4 L1462.5,74.9 L1453.3,80.6 L1459.0,71.4 L1448.5,68.9 L1459.0,66.4 L1453.3,57.2 L1462.5,62.9 Z" fill="#f5a800" stroke="#f2f2f2" stroke-width="1"/>
<!-- assemble 3 partial -->
<path d="M1532,88.7 H1504.6 V111.4 H1532" fill="none" stroke="#555" stroke-width="1.4"/>
<rect x="1534" y="56" width="1.8" height="55.5" fill="#d0202a"/>
<rect x="1537.5" y="56" width="3" height="23" fill="#65abe0"/>
<defs>
<linearGradient id="gTri" x1="0" y1="0" x2="1" y2="1"><stop offset="0" stop-color="#fff"/><stop offset="1" stop-color="#000"/></linearGradient>
<linearGradient id="gRadio" x1="0" y1="0" x2="0" y2="1"><stop offset="0" stop-color="#ffffff"/><stop offset="1" stop-color="#9aa3b5"/></linearGradient>
<linearGradient id="gCube" x1="0" y1="0" x2="0" y2="1"><stop offset="0" stop-color="#e8ecf2"/><stop offset="1" stop-color="#b5bccb"/></linearGradient>
</defs>
<rect x="-2" y="176.6" width="590" height="47" fill="#f2f2f2" stroke="#c8c8c8" stroke-width="1.6"/>
<path d="M1,201.8 L10,196.3 V207.4 Z M10,201.8 L19,196.3 V207.4 Z" fill="#333"/>
<text x="39.3" y="209.0" font-size="23" fill="#5c5c5c" textLength="101.6" lengthAdjust="spacingAndGlyphs">BROWSER</text>
<circle cx="557" cy="201" r="9.7" fill="#222"/><rect x="551" y="199.3" width="12" height="3.4" fill="#fff"/>
<!-- root row -->
<rect x="62" y="236" width="520" height="40" fill="#f2f2f2"/>
<rect x="112" y="239.7" width="419.8" height="32.2" fill="#9a9a9a"/>
<path d="M27,263 H41.3 V249 Z" fill="url(#gTri)" stroke="#000" stroke-width="1.5" stroke-linejoin="round"/>
<g transform="translate(68.2 246.0) scale(1.0000 1.0000)"><path d="M1,10 Q16,-6 31,10 Q16,26 1,10 Z" fill="#999"/><circle cx="16" cy="10" r="5.2" fill="#f2f2f2"/><circle cx="16" cy="10" r="3" fill="#999"/></g>
<path d="M121.5,246.5 L127,241.5 H146 V261 L140.5,266.5 H121.5 Z" fill="url(#gCube)" stroke="#222" stroke-width="1.3"/>
<path d="M121.5,246.5 H140.5 V266.5 M140.5,246.5 L146,241.5" fill="none" stroke="#555" stroke-width="0.8"/>
<text x="177.2" y="265.5" font-size="23" font-weight="bold" fill="#fff" textLength="331.9" lengthAdjust="spacingAndGlyphs">Lesson 4 – revolving, holes,...</text>
<circle cx="553.8" cy="254.9" r="12.2" fill="url(#gRadio)" stroke="#222" stroke-width="1.5"/><circle cx="553.8" cy="254.9" r="4.2" fill="#3a3a3a"/>
<!-- rows -->
<g fill="#f1f1f1">
<rect x="98" y="284" width="292" height="39.7"/>
<rect x="98" y="332" width="227.6" height="39.7"/>
<rect x="98" y="380" width="205.7" height="39.8"/>
<rect x="98" y="428.2" width="205.7" height="39.7"/>
<rect x="98" y="476.1" width="229.5" height="39.7"/>
<rect x="134.2" y="524" width="221.4" height="39.8"/>
</g>
<g fill="#fff" stroke="#000" stroke-width="1.5" stroke-linejoin="miter">
<path d="M64.5,295.5 H68.5 L75.8,304 L68.5,312.5 H64.5 Z"/>
<path d="M64.5,343.5 H68.5 L75.8,352 L68.5,360.5 H64.5 Z"/>
<path d="M64.5,391.5 H68.5 L75.8,400 L68.5,408.5 H64.5 Z"/>
<path d="M64.5,439.5 H68.5 L75.8,448 L68.5,456.5 H64.5 Z"/>
</g>
<path d="M63,502.5 H76.5 V489.5 Z" fill="url(#gTri)" stroke="#000" stroke-width="1.5" stroke-linejoin="round"/>
<!-- gear -->
<g transform="translate(118.8 302.7)" fill="#888">
<circle r="11"/>
<g><rect x="-3.2" y="-15.3" width="6.4" height="7"/><rect x="-3.2" y="8.3" width="6.4" height="7"/><rect x="-15.3" y="-3.2" width="7" height="6.4"/><rect x="8.3" y="-3.2" width="7" height="6.4"/></g>
<g transform="rotate(45)"><rect x="-3.2" y="-15.3" width="6.4" height="7"/><rect x="-3.2" y="8.3" width="6.4" height="7"/><rect x="-15.3" y="-3.2" width="7" height="6.4"/><rect x="8.3" y="-3.2" width="7" height="6.4"/></g>
<circle r="4.8" fill="#f1f1f1"/>
</g>
<g transform="translate(103.8 339.0) scale(1.0000 0.9846)"><path d="M0,3 V0 H12 L14,3 H14 Z" fill="#999"/><path d="M0,4.5 H14 L16,2.5 H32 V26 H0 Z" fill="#999"/></g>
<g transform="translate(104.3 390.0) scale(0.9688 0.9850)"><path d="M1.5,10 Q16,-5 30.5,10 Q16,25 1.5,10 Z" fill="none" stroke="#999" stroke-width="1.6"/><path d="M10,10 A6,6 0 0 1 22,10" fill="none" stroke="#999" stroke-width="1.6"/><path d="M7,1 L25,19" stroke="#999" stroke-width="1.8"/></g>
<g transform="translate(153.8 387.0) scale(1.0094 0.9923)"><path d="M0,3 V0 H12 L14,3 H14 Z" fill="#999"/><path d="M0,4.5 H14 L16,2.5 H32 V26 H0 Z" fill="#999"/></g>
<g transform="translate(104.3 438.0) scale(0.9844 0.9700)"><path d="M1,10 Q16,-6 31,10 Q16,26 1,10 Z" fill="#999"/><circle cx="16" cy="10" r="5.2" fill="#f2f2f2"/><circle cx="16" cy="10" r="3" fill="#999"/></g>
<g transform="translate(153.8 435.2) scale(1.0094 0.9885)"><path d="M0,3 V0 H12 L14,3 H14 Z" fill="#999"/><path d="M0,4.5 H14 L16,2.5 H32 V26 H0 Z" fill="#999"/></g>
<g transform="translate(104.3 486.0) scale(0.9844 0.9700)"><path d="M1,10 Q16,-6 31,10 Q16,26 1,10 Z" fill="#999"/><circle cx="16" cy="10" r="5.2" fill="#f2f2f2"/><circle cx="16" cy="10" r="3" fill="#999"/></g>
<g transform="translate(153.8 483.2) scale(1.0094 0.9885)"><path d="M0,3 V0 H12 L14,3 H14 Z" fill="#999"/><path d="M0,4.5 H14 L16,2.5 H32 V26 H0 Z" fill="#999"/></g>
<g transform="translate(140.5 534.5) scale(0.9688 0.9950)"><path d="M1.5,10 Q16,-5 30.5,10 Q16,25 1.5,10 Z" fill="none" stroke="#999" stroke-width="1.6"/><path d="M10,10 A6,6 0 0 1 22,10" fill="none" stroke="#999" stroke-width="1.6"/><path d="M7,1 L25,19" stroke="#999" stroke-width="1.8"/></g>
<!-- sketch2 icon -->
<path d="M191.5,529.5 H219.5 V550 M191.5,529.5 V557.5 H208" fill="none" stroke="#777" stroke-width="1.2"/>
<path d="M197.5,536 H210 M197.5,536 V549 M211,537 Q210,548 198,550" fill="none" stroke="#777" stroke-width="1.1"/>
<g fill="#1e88e5"><rect x="189.5" y="527.5" width="4" height="4"/><rect x="217.5" y="527.5" width="4" height="4"/><rect x="189.5" y="555.5" width="4" height="4"/><rect x="195.5" y="534" width="3.5" height="3.5"/><rect x="208.5" y="534" width="3.5" height="3.5"/><rect x="195.5" y="547" width="3.5" height="3.5"/></g>
<path d="M208,557 L219,543 L224,547 L213,561 Z" fill="#f2b84b" stroke="#b58a30" stroke-width="0.8"/>
<path d="M219,543 L221,540.5 Q223,538.5 225.5,541 Q227,543 225.5,545 L224,547 Z" fill="#e53935"/>
<path d="M208,557 L206.5,563 L213,561 Z" fill="#555"/>
<g font-size="23" fill="#3a3a3a">
<text x="163.4" y="313.0" textLength="202.7" lengthAdjust="spacingAndGlyphs">Document Settings</text>
<text x="163.4" y="360.5" textLength="143.5" lengthAdjust="spacingAndGlyphs">Named Views</text>
<text x="213.2" y="408.9" textLength="66.8" lengthAdjust="spacingAndGlyphs">Origin</text>
<text x="213.2" y="456.8" textLength="70.3" lengthAdjust="spacingAndGlyphs">Bodies</text>
<text x="212.5" y="504.7" textLength="94.9" lengthAdjust="spacingAndGlyphs">Sketches</text>
<text x="248.8" y="552.6" textLength="85.0" lengthAdjust="spacingAndGlyphs">Sketch2</text>
</g>

</svg>
</body></html>
